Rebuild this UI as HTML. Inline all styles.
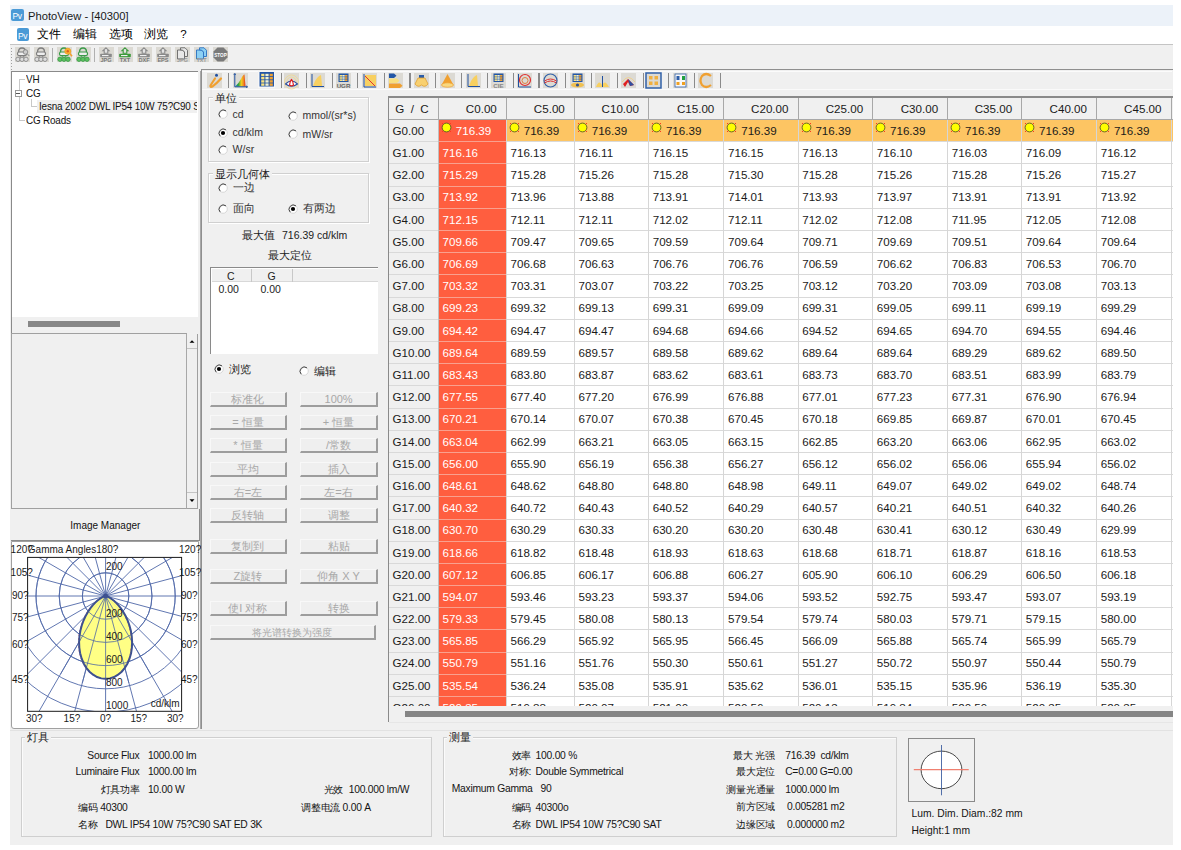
<!DOCTYPE html><html><head><meta charset="utf-8"><style>
html,body{margin:0;padding:0;}
body{width:1181px;height:850px;overflow:hidden;position:relative;background:#fff;font-family:"Liberation Sans",sans-serif;font-size:11px;color:#000;}
body div{position:absolute;box-sizing:border-box;}
.t{white-space:nowrap;line-height:1;}
.btn{background:#efefef;border-top:1px solid #f8f8f8;border-left:1px solid #f8f8f8;border-right:2px solid #9d9d9d;border-bottom:2px solid #9d9d9d;color:#a8a8a8;font-size:11px;text-align:center;line-height:13px;}
.ico{background:#dcdad4;}
svg{position:absolute;overflow:visible;}
</style></head><body>
<div style="left:10px;top:5px;width:1163px;height:840px;background:#f0f0f0;"></div>
<div style="left:10px;top:5px;width:1163px;height:21px;background:#ecf2f9;"></div>
<div style="left:11px;top:9px;width:12.5px;height:12px;background:#4a9ad6;border-radius:2px;"></div>
<div class="t" style="left:12.5px;top:12px;font-size:8.5px;color:#fff;letter-spacing:-0.3px;">Pv</div>
<div class="t" style="left:28px;top:9px;font-size:11.2px;line-height:14px;color:#1a1a1a;">PhotoView - [40300]</div>
<div style="left:10px;top:26px;width:1163px;height:18px;background:#fff;"></div>
<div style="left:16.5px;top:28.4px;width:12.7px;height:12.2px;background:#4a9ad6;border-radius:2px;"></div>
<div class="t" style="left:18px;top:31.5px;font-size:8.5px;color:#fff;letter-spacing:-0.3px;">Pv</div>
<div class="t" style="left:37px;top:28px;font-size:11.5px;line-height:13px;color:#000;">文件</div>
<div class="t" style="left:72.9px;top:28px;font-size:11.5px;line-height:13px;color:#000;">编辑</div>
<div class="t" style="left:108.5px;top:28px;font-size:11.5px;line-height:13px;color:#000;">选项</div>
<div class="t" style="left:144.3px;top:28px;font-size:11.5px;line-height:13px;color:#000;">浏览</div>
<div class="t" style="left:180.3px;top:28px;font-size:11.5px;line-height:13px;color:#000;">?</div>
<div style="left:10px;top:44px;width:1163px;height:1px;background:#c4c4c4;"></div>
<div style="left:11px;top:48px;width:1px;height:1.3px;background:#a0a0a0;"></div>
<div style="left:11px;top:51px;width:1px;height:1.3px;background:#a0a0a0;"></div>
<div style="left:11px;top:54px;width:1px;height:1.3px;background:#a0a0a0;"></div>
<div style="left:11px;top:57px;width:1px;height:1.3px;background:#a0a0a0;"></div>
<div style="left:11px;top:60px;width:1px;height:1.3px;background:#a0a0a0;"></div>
<div style="left:11px;top:63px;width:1px;height:1.3px;background:#a0a0a0;"></div>
<div style="left:11px;top:66px;width:1px;height:1.3px;background:#a0a0a0;"></div>
<div style="left:11px;top:69px;width:1px;height:1.3px;background:#a0a0a0;"></div>
<svg style="left:15px;top:47px" width="15" height="15"><rect width="15" height="15" fill="#dcdad4"/><path d="M3.5,5 Q3.5,1 7,1 Q10.5,1 10.5,5" fill="none" stroke="#7d7d7d" stroke-width="1.3"/><rect x="2.5" y="5" width="9" height="3.6" rx="1.5" fill="#eee" stroke="#7d7d7d" stroke-width="1.2"/><path d="M4.5,9 L7,11 L9.5,9" fill="none" stroke="#7d7d7d" stroke-width="1"/><circle cx="3" cy="12.3" r="2.2" fill="#ddd" stroke="#7d7d7d" stroke-width="0.8"/><circle cx="7" cy="12.3" r="2.2" fill="#ddd" stroke="#7d7d7d" stroke-width="0.8"/><circle cx="11" cy="12.3" r="2.2" fill="#ddd" stroke="#7d7d7d" stroke-width="0.8"/><circle cx="10.5" cy="5" r="2.3" fill="#ccc" stroke="#888" stroke-width="0.9"/><line x1="12" y1="6.5" x2="14.3" y2="9" stroke="#999" stroke-width="1.1"/></svg>
<svg style="left:34px;top:47px" width="15" height="15"><rect width="15" height="15" fill="#dcdad4"/><path d="M3.5,5 Q3.5,1 7,1 Q10.5,1 10.5,5" fill="none" stroke="#7d7d7d" stroke-width="1.3"/><rect x="2.5" y="5" width="9" height="3.6" rx="1.5" fill="#eee" stroke="#7d7d7d" stroke-width="1.2"/><path d="M4.5,9 L7,11 L9.5,9" fill="none" stroke="#7d7d7d" stroke-width="1"/><circle cx="3" cy="12.3" r="2.2" fill="#ddd" stroke="#7d7d7d" stroke-width="0.8"/><circle cx="7" cy="12.3" r="2.2" fill="#ddd" stroke="#7d7d7d" stroke-width="0.8"/><circle cx="11" cy="12.3" r="2.2" fill="#ddd" stroke="#7d7d7d" stroke-width="0.8"/></svg>
<svg style="left:57px;top:47px" width="15" height="15"><rect width="15" height="15" fill="#dcdad4"/><path d="M3.5,5 Q3.5,1 7,1 Q10.5,1 10.5,5" fill="none" stroke="#3a9a48" stroke-width="1.3"/><rect x="2.5" y="5" width="9" height="3.6" rx="1.5" fill="#eee" stroke="#3a9a48" stroke-width="1.2"/><path d="M4.5,9 L7,11 L9.5,9" fill="none" stroke="#3a9a48" stroke-width="1"/><circle cx="3" cy="12.3" r="2.2" fill="#5cc060" stroke="#3a9a48" stroke-width="0.8"/><circle cx="7" cy="12.3" r="2.2" fill="#5cc060" stroke="#3a9a48" stroke-width="0.8"/><circle cx="11" cy="12.3" r="2.2" fill="#5cc060" stroke="#3a9a48" stroke-width="0.8"/><circle cx="10.8" cy="4.2" r="3" fill="#f8b030" stroke="#f0a020" stroke-width="0.8"/><circle cx="10.8" cy="4.2" r="1.2" fill="#e06020"/><line x1="12.8" y1="6.5" x2="15" y2="9.2" stroke="#f0a030" stroke-width="1.6"/></svg>
<svg style="left:76px;top:47px" width="15" height="15"><rect width="15" height="15" fill="#dcdad4"/><path d="M3.5,5 Q3.5,1 7,1 Q10.5,1 10.5,5" fill="none" stroke="#3a9a48" stroke-width="1.3"/><rect x="2.5" y="5" width="9" height="3.6" rx="1.5" fill="#eee" stroke="#3a9a48" stroke-width="1.2"/><path d="M4.5,9 L7,11 L9.5,9" fill="none" stroke="#3a9a48" stroke-width="1"/><circle cx="3" cy="12.3" r="2.2" fill="#5cc060" stroke="#3a9a48" stroke-width="0.8"/><circle cx="7" cy="12.3" r="2.2" fill="#5cc060" stroke="#3a9a48" stroke-width="0.8"/><circle cx="11" cy="12.3" r="2.2" fill="#5cc060" stroke="#3a9a48" stroke-width="0.8"/></svg>
<svg style="left:99px;top:47px" width="15" height="15"><rect width="15" height="15" fill="#dcdad4"/><path d="M7,0.8 L10,3.6 L8.8,3.6 L8.8,6.2 L5.2,6.2 L5.2,3.6 L4,3.6 Z" fill="#e4e4e4" stroke="#8a8a8a" stroke-width="1.1"/><rect x="1.2" y="6.8" width="11.6" height="3.4" rx="0.8" fill="#8a8a8a"/><rect x="3" y="8" width="6.5" height="1.1" fill="#f0f0f0"/><text x="7" y="15.3" font-size="5.6" fill="#777" text-anchor="middle" font-family="Liberation Sans" font-weight="bold">JPG</text></svg>
<svg style="left:118px;top:47px" width="15" height="15"><rect width="15" height="15" fill="#dcdad4"/><path d="M7,0.8 L10,3.6 L8.8,3.6 L8.8,6.2 L5.2,6.2 L5.2,3.6 L4,3.6 Z" fill="#e4e4e4" stroke="#3c9a3c" stroke-width="1.1"/><rect x="1.2" y="6.8" width="11.6" height="3.4" rx="0.8" fill="#3c9a3c"/><rect x="3" y="8" width="6.5" height="1.1" fill="#f0f0f0"/><text x="7" y="15.3" font-size="5.6" fill="#777" text-anchor="middle" font-family="Liberation Sans" font-weight="bold">TXT</text></svg>
<svg style="left:137px;top:47px" width="15" height="15"><rect width="15" height="15" fill="#dcdad4"/><path d="M7,0.8 L10,3.6 L8.8,3.6 L8.8,6.2 L5.2,6.2 L5.2,3.6 L4,3.6 Z" fill="#e4e4e4" stroke="#8a8a8a" stroke-width="1.1"/><rect x="1.2" y="6.8" width="11.6" height="3.4" rx="0.8" fill="#8a8a8a"/><rect x="3" y="8" width="6.5" height="1.1" fill="#f0f0f0"/><text x="7" y="15.3" font-size="5.6" fill="#777" text-anchor="middle" font-family="Liberation Sans" font-weight="bold">DXF</text></svg>
<svg style="left:156px;top:47px" width="15" height="15"><rect width="15" height="15" fill="#dcdad4"/><path d="M7,0.8 L10,3.6 L8.8,3.6 L8.8,6.2 L5.2,6.2 L5.2,3.6 L4,3.6 Z" fill="#e4e4e4" stroke="#8a8a8a" stroke-width="1.1"/><rect x="1.2" y="6.8" width="11.6" height="3.4" rx="0.8" fill="#8a8a8a"/><rect x="3" y="8" width="6.5" height="1.1" fill="#f0f0f0"/><text x="7" y="15.3" font-size="5.6" fill="#777" text-anchor="middle" font-family="Liberation Sans" font-weight="bold">EPS</text></svg>
<svg style="left:175px;top:47px" width="15" height="15"><rect width="15" height="15" fill="#dcdad4"/><path d="M2.5,3 H7.5 L9.5,5 V12 H2.5 Z" fill="#e8e8e8" stroke="#666" stroke-width="0.9"/><path d="M5.5,0.8 H10 L12.5,3.3 V9.5 H9.5 V5 L7.5,3 H5.5Z" fill="#e8e8e8" stroke="#666" stroke-width="0.9"/><text x="7.5" y="15.3" font-size="5.4" fill="#999" text-anchor="middle" font-family="Liberation Sans" font-weight="bold">JPG</text></svg>
<svg style="left:194px;top:47px" width="15" height="15"><rect width="15" height="15" fill="#dcdad4"/><path d="M2.5,3 H7.5 L9.5,5 V12 H2.5 Z" fill="#8cd0f4" stroke="#2a70c0" stroke-width="0.9"/><path d="M5.5,0.8 H10 L12.5,3.3 V9.5 H9.5 V5 L7.5,3 H5.5Z" fill="#8cd0f4" stroke="#2a70c0" stroke-width="0.9"/><text x="7.5" y="15.3" font-size="5.4" fill="#999" text-anchor="middle" font-family="Liberation Sans" font-weight="bold">TXT</text></svg>
<svg style="left:213px;top:47px" width="15" height="15"><rect width="15" height="15" fill="#dcdad4"/><polygon points="4.5,0.5 10.5,0.5 14.5,4.5 14.5,10.5 10.5,14.5 4.5,14.5 0.5,10.5 0.5,4.5" fill="#7a7a7a"/><text x="7.5" y="9.6" font-size="5.3" fill="#fff" text-anchor="middle" font-family="Liberation Sans" font-weight="bold" textLength="12.5" lengthAdjust="spacingAndGlyphs">STOP</text></svg>
<div style="left:52px;top:48px;width:1px;height:14px;background:#b0b0b0;"></div>
<div style="left:94px;top:48px;width:1px;height:14px;background:#b0b0b0;"></div>
<div style="left:11px;top:71px;width:187px;height:262px;background:#fff;border-top:1px solid #8a8a8a;border-left:1px solid #8a8a8a;"></div>
<div style="left:12px;top:316.5px;width:186px;height:16.5px;background:#f0f0f0;"></div>
<div style="left:28px;top:321px;width:92px;height:6.3px;background:#878787;"></div>
<div style="left:18.5px;top:79px;width:1px;height:41px;background:#c8c8c8;"></div>
<div style="left:18.5px;top:79px;width:6px;height:1px;background:#c8c8c8;"></div>
<div style="left:18.5px;top:119.5px;width:6px;height:1px;background:#c8c8c8;"></div>
<div style="left:14.8px;top:89.5px;width:7px;height:7px;background:#fff;border:1px solid #9a9a9a;"></div>
<div style="left:16.3px;top:92.7px;width:4px;height:1px;background:#555;"></div>
<div style="left:31px;top:99px;width:1px;height:7px;background:#c8c8c8;"></div>
<div style="left:31px;top:106px;width:6px;height:1px;background:#c8c8c8;"></div>
<div style="left:37px;top:99.6px;width:160px;height:13.2px;background:#f0f0f0;"></div>
<div style="left:12px;top:72px;width:185px;height:244px;overflow:hidden;">
<div class="t" style="left:13.7px;top:2px;font-size:11px;line-height:11px;color:#111;letter-spacing:-0.2px;transform:scaleX(0.9);transform-origin:0 0;">VH</div>
<div class="t" style="left:13.7px;top:16px;font-size:11px;line-height:11px;color:#111;letter-spacing:-0.2px;transform:scaleX(0.9);transform-origin:0 0;">CG</div>
<div class="t" style="left:26.8px;top:29px;font-size:11px;line-height:11px;color:#111;letter-spacing:-0.2px;transform:scaleX(0.9);transform-origin:0 0;">Iesna 2002 DWL IP54 10W 75?C90 SAT ED 3K</div>
<div class="t" style="left:13.7px;top:42.5px;font-size:11px;line-height:11px;color:#111;letter-spacing:-0.2px;transform:scaleX(0.9);transform-origin:0 0;">CG Roads</div>
</div>
<div style="left:11px;top:333px;width:175.5px;height:175.5px;background:#f0f0f0;border-top:1px solid #a0a0a0;border-left:1px solid #a0a0a0;border-right:1.5px solid #a8a8a8;border-bottom:1px solid #a0a0a0;"></div>
<div style="left:186.5px;top:333.5px;width:11.5px;height:175px;background:#f0f0f0;border-right:1.5px solid #a0a0a0;border-bottom:1px solid #a0a0a0;"></div>
<div style="left:186.5px;top:334px;width:10px;height:15px;background:#f0f0f0;border-bottom:1px solid #c4c4c4;"></div>
<div style="left:186.5px;top:492px;width:10px;height:15px;background:#f0f0f0;border-top:1px solid #c4c4c4;"></div>
<svg style="left:186.5px;top:334px" width="10" height="173"><polygon points="2.5,8.8 7.5,8.8 5,6.2" fill="#000"/><polygon points="2.5,165.2 7.5,165.2 5,168" fill="#000"/></svg>
<div style="left:11px;top:509px;width:188.5px;height:31.5px;background:#f0f0f0;border-right:1.6px solid #8a8a8a;border-bottom:1.8px solid #8a8a8a;"></div>
<div class="t" style="left:70.3px;top:520.5px;font-size:10px;color:#111;">Image Manager</div>
<div style="left:11px;top:540.5px;width:188px;height:188px;background:#fff;border:1px solid #a0a0a0;border-radius:0 0 3px 3px;"></div>
<div style="left:200px;top:71px;width:2px;height:658px;background:#a8a8a8;"></div>
<svg style="left:0px;top:0px" width="1181" height="850" viewBox="0 0 1181 850"><defs><clipPath id="pc"><rect x="27.6" y="557.4" width="154.0" height="153.89999999999998"/></clipPath></defs><g clip-path="url(#pc)" stroke="#4f68a8" stroke-width="0.9" fill="none"><circle cx="105.6" cy="596.0" r="23.20"/><circle cx="105.6" cy="596.0" r="46.40"/><circle cx="105.6" cy="596.0" r="69.60"/><circle cx="105.6" cy="596.0" r="92.80"/><circle cx="105.6" cy="596.0" r="116.00"/><circle cx="105.6" cy="596.0" r="139.20"/><circle cx="105.6" cy="596.0" r="162.40"/><line x1="105.6" y1="596.0" x2="105.60" y2="896.00"/><line x1="105.6" y1="596.0" x2="183.25" y2="885.78"/><line x1="105.6" y1="596.0" x2="255.60" y2="855.81"/><line x1="105.6" y1="596.0" x2="317.73" y2="808.13"/><line x1="105.6" y1="596.0" x2="365.41" y2="746.00"/><line x1="105.6" y1="596.0" x2="395.38" y2="673.65"/><line x1="105.6" y1="596.0" x2="405.60" y2="596.00"/><line x1="105.6" y1="596.0" x2="395.38" y2="518.35"/><line x1="105.6" y1="596.0" x2="365.41" y2="446.00"/><line x1="105.6" y1="596.0" x2="317.73" y2="383.87"/><line x1="105.6" y1="596.0" x2="255.60" y2="336.19"/><line x1="105.6" y1="596.0" x2="183.25" y2="306.22"/><line x1="105.6" y1="596.0" x2="105.60" y2="296.00"/><line x1="105.6" y1="596.0" x2="27.95" y2="306.22"/><line x1="105.6" y1="596.0" x2="-44.40" y2="336.19"/><line x1="105.6" y1="596.0" x2="-106.53" y2="383.87"/><line x1="105.6" y1="596.0" x2="-154.21" y2="446.00"/><line x1="105.6" y1="596.0" x2="-184.18" y2="518.35"/><line x1="105.6" y1="596.0" x2="-194.40" y2="596.00"/><line x1="105.6" y1="596.0" x2="-184.18" y2="673.65"/><line x1="105.6" y1="596.0" x2="-154.21" y2="746.00"/><line x1="105.6" y1="596.0" x2="-106.53" y2="808.13"/><line x1="105.6" y1="596.0" x2="-44.40" y2="855.81"/><line x1="105.6" y1="596.0" x2="27.95" y2="885.78"/></g><path d="M105.60,596.00 L105.59,596.00 L105.52,596.01 L105.34,596.04 L104.98,596.13 L104.39,596.32 L103.53,596.67 L102.39,597.23 L100.95,598.07 L99.22,599.25 L97.23,600.83 L95.04,602.86 L92.69,605.38 L90.28,608.41 L87.88,611.95 L85.60,616.00 L83.52,620.53 L81.74,625.47 L80.36,630.74 L79.45,636.27 L79.08,641.93 L79.30,647.61 L80.14,653.18 L81.61,658.50 L83.69,663.44 L86.34,667.86 L89.52,671.67 L93.13,674.74 L97.09,677.00 L101.28,678.38 L105.60,678.84 L109.92,678.38 L114.11,677.00 L118.07,674.74 L121.68,671.67 L124.86,667.86 L127.51,663.44 L129.59,658.50 L131.06,653.18 L131.90,647.61 L132.12,641.93 L131.75,636.27 L130.84,630.74 L129.46,625.47 L127.68,620.53 L125.60,616.00 L123.32,611.95 L120.92,608.41 L118.51,605.38 L116.16,602.86 L113.97,600.83 L111.98,599.25 L110.25,598.07 L108.81,597.23 L107.67,596.67 L106.81,596.32 L106.22,596.13 L105.86,596.04 L105.68,596.01 L105.61,596.00 L105.60,596.00 Z" fill="#ffff78" fill-opacity="0.9" stroke="none" clip-path="url(#pc)"/><g clip-path="url(#pc)" stroke="#4f68a8" stroke-width="0.9" fill="none"><circle cx="105.6" cy="596.0" r="23.20" stroke-opacity="0.85"/><circle cx="105.6" cy="596.0" r="46.40" stroke-opacity="0.85"/><circle cx="105.6" cy="596.0" r="69.60" stroke-opacity="0.85"/><line x1="105.6" y1="596.0" x2="60.60" y2="673.94" stroke-opacity="0.85"/><line x1="105.6" y1="596.0" x2="82.31" y2="682.93" stroke-opacity="0.85"/><line x1="105.6" y1="596.0" x2="105.60" y2="686.00" stroke-opacity="0.85"/><line x1="105.6" y1="596.0" x2="128.89" y2="682.93" stroke-opacity="0.85"/><line x1="105.6" y1="596.0" x2="150.60" y2="673.94" stroke-opacity="0.85"/></g><path d="M105.60,596.00 L105.59,596.00 L105.52,596.01 L105.34,596.04 L104.98,596.13 L104.39,596.32 L103.53,596.67 L102.39,597.23 L100.95,598.07 L99.22,599.25 L97.23,600.83 L95.04,602.86 L92.69,605.38 L90.28,608.41 L87.88,611.95 L85.60,616.00 L83.52,620.53 L81.74,625.47 L80.36,630.74 L79.45,636.27 L79.08,641.93 L79.30,647.61 L80.14,653.18 L81.61,658.50 L83.69,663.44 L86.34,667.86 L89.52,671.67 L93.13,674.74 L97.09,677.00 L101.28,678.38 L105.60,678.84 L109.92,678.38 L114.11,677.00 L118.07,674.74 L121.68,671.67 L124.86,667.86 L127.51,663.44 L129.59,658.50 L131.06,653.18 L131.90,647.61 L132.12,641.93 L131.75,636.27 L130.84,630.74 L129.46,625.47 L127.68,620.53 L125.60,616.00 L123.32,611.95 L120.92,608.41 L118.51,605.38 L116.16,602.86 L113.97,600.83 L111.98,599.25 L110.25,598.07 L108.81,597.23 L107.67,596.67 L106.81,596.32 L106.22,596.13 L105.86,596.04 L105.68,596.01 L105.61,596.00 L105.60,596.00 Z" fill="none" stroke="#e05050" stroke-width="0.8" stroke-dasharray="2,2" transform="translate(-0.6,0)"/><path d="M105.60,596.00 L105.59,596.00 L105.52,596.01 L105.34,596.04 L104.98,596.13 L104.39,596.32 L103.53,596.67 L102.39,597.23 L100.95,598.07 L99.22,599.25 L97.23,600.83 L95.04,602.86 L92.69,605.38 L90.28,608.41 L87.88,611.95 L85.60,616.00 L83.52,620.53 L81.74,625.47 L80.36,630.74 L79.45,636.27 L79.08,641.93 L79.30,647.61 L80.14,653.18 L81.61,658.50 L83.69,663.44 L86.34,667.86 L89.52,671.67 L93.13,674.74 L97.09,677.00 L101.28,678.38 L105.60,678.84 L109.92,678.38 L114.11,677.00 L118.07,674.74 L121.68,671.67 L124.86,667.86 L127.51,663.44 L129.59,658.50 L131.06,653.18 L131.90,647.61 L132.12,641.93 L131.75,636.27 L130.84,630.74 L129.46,625.47 L127.68,620.53 L125.60,616.00 L123.32,611.95 L120.92,608.41 L118.51,605.38 L116.16,602.86 L113.97,600.83 L111.98,599.25 L110.25,598.07 L108.81,597.23 L107.67,596.67 L106.81,596.32 L106.22,596.13 L105.86,596.04 L105.68,596.01 L105.61,596.00 L105.60,596.00 Z" fill="none" stroke="#3d5190" stroke-width="2"/><circle cx="105.6" cy="596.0" r="2.5" fill="#3d5190"/><rect x="27.6" y="557.4" width="154.0" height="153.89999999999998" fill="none" stroke="#1a1a1a" stroke-width="1"/></svg>
<div class="t" style="left:10.6px;top:545.3px;font-size:10px;color:#1a1a1a;">120?</div>
<div class="t" style="left:179px;top:545.3px;font-size:10px;color:#1a1a1a;">120?</div>
<div class="t" style="left:10.6px;top:567.9px;font-size:10px;color:#1a1a1a;">105?</div>
<div class="t" style="left:179px;top:567.9px;font-size:10px;color:#1a1a1a;">105?</div>
<div class="t" style="left:12px;top:591.4px;font-size:10px;color:#1a1a1a;">90?</div>
<div class="t" style="left:181px;top:591.4px;font-size:10px;color:#1a1a1a;">90?</div>
<div class="t" style="left:12px;top:613.1px;font-size:10px;color:#1a1a1a;">75?</div>
<div class="t" style="left:181px;top:613.1px;font-size:10px;color:#1a1a1a;">75?</div>
<div class="t" style="left:12px;top:639.5px;font-size:10px;color:#1a1a1a;">60?</div>
<div class="t" style="left:181px;top:639.5px;font-size:10px;color:#1a1a1a;">60?</div>
<div class="t" style="left:12px;top:674.7px;font-size:10px;color:#1a1a1a;">45?</div>
<div class="t" style="left:181px;top:674.7px;font-size:10px;color:#1a1a1a;">45?</div>
<div class="t" style="left:27.8px;top:545.2px;font-size:10px;color:#1a1a1a;">Gamma Angles180?</div>
<div class="t" style="left:26px;top:713.8px;font-size:10px;color:#1a1a1a;">30?</div>
<div class="t" style="left:63.6px;top:713.8px;font-size:10px;color:#1a1a1a;">15?</div>
<div class="t" style="left:100px;top:713.8px;font-size:10px;color:#1a1a1a;">0?</div>
<div class="t" style="left:130.5px;top:713.8px;font-size:10px;color:#1a1a1a;">15?</div>
<div class="t" style="left:167px;top:713.8px;font-size:10px;color:#1a1a1a;">30?</div>
<div class="t" style="left:106px;top:561.5px;font-size:10px;color:#1a1a1a;">200</div>
<div class="t" style="left:106px;top:608.5px;font-size:10px;color:#1a1a1a;">200</div>
<div class="t" style="left:106px;top:631.5px;font-size:10px;color:#1a1a1a;">400</div>
<div class="t" style="left:106px;top:654.5px;font-size:10px;color:#1a1a1a;">600</div>
<div class="t" style="left:106px;top:677.5px;font-size:10px;color:#1a1a1a;">800</div>
<div class="t" style="left:106px;top:700.5px;font-size:10px;color:#1a1a1a;">1000</div>
<div class="t" style="left:150.7px;top:699.2px;font-size:10px;color:#1a1a1a;">cd/klm</div>
<div style="left:201px;top:69px;width:972px;height:660px;background:#f0f0f0;border-top:1.5px solid #8f8f8f;border-left:1px solid #8f8f8f;"></div>
<div style="left:202px;top:71px;width:970px;height:1px;background:#fbfbfb;"></div>
<div style="left:202px;top:88.6px;width:970px;height:1px;background:#fafafa;"></div>
<div style="left:228.2px;top:73px;width:1.2px;height:15px;background:#8a8a8a;"></div>
<div style="left:281.2px;top:73px;width:1.2px;height:15px;background:#8a8a8a;"></div>
<div style="left:305.9px;top:73px;width:1.2px;height:15px;background:#8a8a8a;"></div>
<div style="left:331.9px;top:73px;width:1.2px;height:15px;background:#8a8a8a;"></div>
<div style="left:357px;top:73px;width:1.2px;height:15px;background:#8a8a8a;"></div>
<div style="left:383.6px;top:73px;width:1.2px;height:15px;background:#8a8a8a;"></div>
<div style="left:409.4px;top:73px;width:1.2px;height:15px;background:#8a8a8a;"></div>
<div style="left:435.3px;top:73px;width:1.2px;height:15px;background:#8a8a8a;"></div>
<div style="left:461.3px;top:73px;width:1.2px;height:15px;background:#8a8a8a;"></div>
<div style="left:487px;top:73px;width:1.2px;height:15px;background:#8a8a8a;"></div>
<div style="left:512.6px;top:73px;width:1.2px;height:15px;background:#8a8a8a;"></div>
<div style="left:538.4px;top:73px;width:1.2px;height:15px;background:#8a8a8a;"></div>
<div style="left:564.8px;top:73px;width:1.2px;height:15px;background:#8a8a8a;"></div>
<div style="left:590.8px;top:73px;width:1.2px;height:15px;background:#8a8a8a;"></div>
<div style="left:616.5px;top:73px;width:1.2px;height:15px;background:#8a8a8a;"></div>
<div style="left:642.5px;top:73px;width:1.2px;height:15px;background:#8a8a8a;"></div>
<div style="left:668.3px;top:73px;width:1.2px;height:15px;background:#8a8a8a;"></div>
<div style="left:694px;top:73px;width:1.2px;height:15px;background:#8a8a8a;"></div>
<div style="left:720px;top:73px;width:1.2px;height:15px;background:#8a8a8a;"></div>
<svg style="left:206.8px;top:72.8px" width="15" height="15"><rect width="15" height="15" fill="#dcdad4"/><circle cx="9.5" cy="2.3" r="1.5" fill="#2050a0"/><path d="M8,5.5 Q5,10 3.5,12.5 Q3,14.5 5.5,13.5 Q10,10 14,5.5" stroke="#f0a030" stroke-width="2.2" fill="none" stroke-linecap="round"/></svg>
<svg style="left:232.6px;top:72.8px" width="15" height="15"><defs><linearGradient id="spg" x1="0" x2="1" y1="0" y2="0"><stop offset="0" stop-color="#2090d0"/><stop offset="0.3" stop-color="#20a040"/><stop offset="0.6" stop-color="#f0d020"/><stop offset="0.85" stop-color="#f08020"/><stop offset="1" stop-color="#e02020"/></linearGradient></defs><rect width="15" height="15" fill="#dcdad4"/><path d="M2,13.5 Q6,10 8,6 Q10,1.5 11.5,1.5 L12.5,13.5Z" fill="url(#spg)"/><path d="M1.8,0.5 V13.8 H14.5" stroke="#2050a0" stroke-width="1" fill="none"/><path d="M0.8,2 L1.8,0.5 L2.8,2" stroke="#2050a0" stroke-width="0.8" fill="none"/><path d="M13,12.8 L14.5,13.8 L13,14.8" stroke="#2050a0" stroke-width="0.8" fill="none"/></svg>
<svg style="left:257.9px;top:71px" width="17" height="17"><rect x="0" y="0" width="17" height="17" fill="#f6f6f6"/><rect x="1.5" y="1" width="14.5" height="14.5" fill="#2356a6"/><rect x="3.2" y="2.8" width="3.2" height="2.4" fill="#f8e080"/><rect x="7.4" y="2.8" width="3.2" height="2.4" fill="#f0f0d0"/><rect x="11.6" y="2.8" width="3.2" height="2.4" fill="#f0a030"/><rect x="3.2" y="6.0" width="3.2" height="2.4" fill="#f8e080"/><rect x="7.4" y="6.0" width="3.2" height="2.4" fill="#f0f0d0"/><rect x="11.6" y="6.0" width="3.2" height="2.4" fill="#f0a030"/><rect x="3.2" y="9.2" width="3.2" height="2.4" fill="#f8e080"/><rect x="7.4" y="9.2" width="3.2" height="2.4" fill="#f0f0d0"/><rect x="11.6" y="9.2" width="3.2" height="2.4" fill="#f0a030"/><rect x="3.2" y="12.4" width="3.2" height="2.4" fill="#f8e080"/><rect x="7.4" y="12.4" width="3.2" height="2.4" fill="#f0f0d0"/><rect x="11.6" y="12.4" width="3.2" height="2.4" fill="#f0a030"/></svg>
<svg style="left:284.3px;top:72.8px" width="15" height="15"><rect width="15" height="15" fill="#dcdad4"/><circle cx="7.5" cy="9" r="7" stroke="#f0d890" fill="none" stroke-width="0.8"/><circle cx="7.5" cy="9" r="4.8" stroke="#f0d890" fill="none" stroke-width="0.8"/><path d="M1.5,11 Q7.5,5 13.5,11 Q7.5,15.5 1.5,11Z" fill="#fff" stroke="#3050a0" stroke-width="1.1"/><path d="M5.5,12 Q6,8 7.5,6.5 Q9,8 9.5,12 Q7.5,13.5 5.5,12Z" fill="#fff" stroke="#e02020" stroke-width="1.2"/></svg>
<svg style="left:310.3px;top:72.8px" width="15" height="15"><rect width="15" height="15" fill="#dcdad4"/><path d="M3,13 L5,8 Q8,3 11,2 L12,13Z" fill="#f8d060"/><path d="M2,1 V13.5 H14" stroke="#2050a0" fill="none"/></svg>
<svg style="left:335.6px;top:72.8px" width="15" height="15"><rect width="15" height="15" fill="#dcdad4"/><rect x="2.5" y="0.5" width="10" height="8.5" fill="#2356a6"/><rect x="3.6" y="2" width="2.4" height="1.6" fill="#f8e080"/><rect x="6.3" y="2" width="2.4" height="1.6" fill="#f0f0d0"/><rect x="9" y="2" width="2.4" height="1.6" fill="#f0a030"/><rect x="3.6" y="4.2" width="2.4" height="1.6" fill="#f8e080"/><rect x="6.3" y="4.2" width="2.4" height="1.6" fill="#f0f0d0"/><rect x="9" y="4.2" width="2.4" height="1.6" fill="#f0a030"/><rect x="3.6" y="6.4" width="2.4" height="1.6" fill="#f8e080"/><rect x="6.3" y="6.4" width="2.4" height="1.6" fill="#f0f0d0"/><rect x="9" y="6.4" width="2.4" height="1.6" fill="#f0a030"/><text x="7.5" y="14.8" font-size="6.2" fill="#666" text-anchor="middle" font-family="Liberation Sans" font-weight="bold">UGR</text></svg>
<svg style="left:362.0px;top:72.8px" width="15" height="15"><rect width="15" height="15" fill="#dcdad4"/><rect x="3" y="2" width="11" height="11" fill="#f8d060"/><path d="M3,3 Q8,8 13,13" stroke="#e03030" fill="none"/><path d="M2,1 V14 H14" stroke="#2050a0" fill="none"/></svg>
<svg style="left:387.8px;top:72.8px" width="15" height="15"><rect width="15" height="15" fill="#dcdad4"/><path d="M1,0.5 H6 L8.5,2.8 L6,5 H1Z" fill="#2356a6"/><path d="M1,5.5 H9 L11.5,7.8 L9,10 H1Z" fill="#f8e080"/><path d="M1,10.5 H12 L14.5,12.7 L12,15 H1Z" fill="#f0a030"/></svg>
<svg style="left:413.8px;top:72.8px" width="15" height="15"><rect width="15" height="15" fill="#dcdad4"/><rect x="5" y="2" width="5" height="3" fill="#2a5ca8"/><path d="M4,5 H11 L14,11 Q11,15 7.5,12 Q4,15 1,11Z" fill="#f8d070" stroke="#e0a030" stroke-width="0.8"/></svg>
<svg style="left:439.5px;top:72.8px" width="15" height="15"><rect width="15" height="15" fill="#dcdad4"/><path d="M7.5,1 L13.5,12 L1.5,12Z" fill="#f0a030"/><ellipse cx="7.5" cy="12" rx="6" ry="2.2" fill="#f8d880" stroke="#f0a030" stroke-width="0.7"/></svg>
<svg style="left:465.7px;top:72.8px" width="15" height="15"><rect width="15" height="15" fill="#dcdad4"/><path d="M3,13 L5,8 Q8,3 11,2 L12,13Z" fill="#f8d060"/><path d="M2,1 V13.5 H14" stroke="#2050a0" fill="none"/></svg>
<svg style="left:491.0px;top:72.8px" width="15" height="15"><rect width="15" height="15" fill="#dcdad4"/><rect x="2.5" y="0.5" width="10" height="8.5" fill="#2356a6"/><rect x="3.6" y="2" width="2.4" height="1.6" fill="#f8e080"/><rect x="6.3" y="2" width="2.4" height="1.6" fill="#f0f0d0"/><rect x="9" y="2" width="2.4" height="1.6" fill="#f0a030"/><rect x="3.6" y="4.2" width="2.4" height="1.6" fill="#f8e080"/><rect x="6.3" y="4.2" width="2.4" height="1.6" fill="#f0f0d0"/><rect x="9" y="4.2" width="2.4" height="1.6" fill="#f0a030"/><rect x="3.6" y="6.4" width="2.4" height="1.6" fill="#f8e080"/><rect x="6.3" y="6.4" width="2.4" height="1.6" fill="#f0f0d0"/><rect x="9" y="6.4" width="2.4" height="1.6" fill="#f0a030"/><text x="7.5" y="14.8" font-size="6.2" fill="#888" text-anchor="middle" font-family="Liberation Sans" font-weight="bold">CIE</text></svg>
<svg style="left:517.4px;top:72.8px" width="15" height="15"><rect width="15" height="15" fill="#dcdad4"/><circle cx="8" cy="7" r="5.5" fill="none" stroke="#e03030" stroke-width="1.2"/><circle cx="8" cy="7.5" r="3" fill="none" stroke="#e08040"/><path d="M1.5,1 V14 H14" stroke="#2050a0" fill="none"/></svg>
<svg style="left:542.8px;top:72.8px" width="15" height="15"><rect width="15" height="15" fill="#dcdad4"/><circle cx="7.5" cy="7.5" r="6.5" fill="none" stroke="#3060a8" stroke-width="1.2"/><path d="M1.5,8 Q7.5,4 13.5,8" stroke="#e03030" fill="none"/><path d="M1.5,10 Q7.5,6 13.5,10" stroke="#e03030" fill="none"/></svg>
<svg style="left:570.3px;top:72.8px" width="15" height="15"><rect width="15" height="15" fill="#dcdad4"/><rect x="2.5" y="0.5" width="10" height="8.5" fill="#2356a6"/><rect x="3.6" y="2" width="2.4" height="1.6" fill="#f8e080"/><rect x="6.3" y="2" width="2.4" height="1.6" fill="#f0f0d0"/><rect x="9" y="2" width="2.4" height="1.6" fill="#f0a030"/><rect x="3.6" y="4.2" width="2.4" height="1.6" fill="#f8e080"/><rect x="6.3" y="4.2" width="2.4" height="1.6" fill="#f0f0d0"/><rect x="9" y="4.2" width="2.4" height="1.6" fill="#f0a030"/><rect x="3.6" y="6.4" width="2.4" height="1.6" fill="#f8e080"/><rect x="6.3" y="6.4" width="2.4" height="1.6" fill="#f0f0d0"/><rect x="9" y="6.4" width="2.4" height="1.6" fill="#f0a030"/><ellipse cx="7.5" cy="12" rx="6.5" ry="2.6" fill="#f0c050"/><circle cx="7.5" cy="12" r="1.6" fill="#305090"/></svg>
<svg style="left:594.5px;top:72.8px" width="15" height="15"><rect width="15" height="15" fill="#dcdad4"/><path d="M1,14 Q4,6 7,12 Q10,6 14,14Z" fill="#f8d060"/><line x1="7.5" y1="3" x2="7.5" y2="14" stroke="#2050a0"/></svg>
<svg style="left:620.5px;top:72.8px" width="15" height="15"><rect width="15" height="15" fill="#dcdad4"/><path d="M1,9 Q7.5,0 14,9" stroke="#f0d090" fill="none"/><path d="M2,11 L7,6 L13,12 L9,13 L7,9 L4,14Z" fill="#e02020"/><path d="M7,6 L13,12 L9,13Z" fill="#3050a0"/></svg>
<svg style="left:646.2px;top:72.8px" width="15" height="15"><rect width="15" height="15" fill="#dcdad4" stroke="#3060a8" stroke-width="1.5"/><rect x="3" y="3" width="3.5" height="3.5" fill="#f0b040"/><rect x="8.5" y="3" width="3.5" height="3.5" fill="#f0b040"/><rect x="3" y="8.5" width="3.5" height="3.5" fill="#f0b040"/><rect x="8.5" y="8.5" width="3.5" height="3.5" fill="#f0b040"/></svg>
<svg style="left:672.7px;top:72.8px" width="15" height="15"><rect width="15" height="15" fill="#dcdad4"/><rect x="2" y="1" width="11" height="13" fill="#f8f8f8" stroke="#3060a8" stroke-width="0.8"/><rect x="3.5" y="3" width="3" height="4" fill="#2a5ca8"/><rect x="9" y="3" width="3" height="4" fill="#20a040"/><rect x="9" y="9" width="3" height="3" fill="#f0a020"/><rect x="3.5" y="9" width="3" height="3" fill="#f0a020"/></svg>
<svg style="left:698.0px;top:72.8px" width="15" height="15"><rect width="15" height="15" fill="#dcdad4"/><path d="M13,3 Q8,-1 4,3 Q1,7.5 4,12 Q8,16 13,12" stroke="#f0a030" stroke-width="2.2" fill="none"/></svg>
<div style="left:208px;top:97px;width:160.6px;height:64.5px;border:1px solid #d0d0d0;box-shadow:inset 1px 1px 0 #fff, 1px 1px 0 #fff;"></div>
<div class="t" style="left:213px;top:91.5px;font-size:11px;line-height:12px;background:#f0f0f0;padding:0 2px;color:#1a1a1a;">单位</div>
<div style="left:208px;top:173.2px;width:160.6px;height:50px;border:1px solid #d0d0d0;box-shadow:inset 1px 1px 0 #fff, 1px 1px 0 #fff;"></div>
<div class="t" style="left:213px;top:167.5px;font-size:11px;line-height:12px;background:#f0f0f0;padding:0 2px;color:#1a1a1a;">显示几何体</div>
<svg style="left:217.5px;top:109.4px" width="10" height="10"><circle cx="5" cy="5" r="4.3" fill="#fff" stroke="#d4d4d4" stroke-width="0.9"/><path d="M2.2,8.2 A4.3,4.3 0 0 1 8,1.9" stroke="#444" stroke-width="1" fill="none"/></svg>
<div class="t" style="left:232.6px;top:109px;font-size:10.5px;color:#333;line-height:11px;">cd</div>
<svg style="left:217.5px;top:127.5px" width="10" height="10"><circle cx="5" cy="5" r="4.3" fill="#fff" stroke="#d4d4d4" stroke-width="0.9"/><path d="M2.2,8.2 A4.3,4.3 0 0 1 8,1.9" stroke="#444" stroke-width="1" fill="none"/><circle cx="5" cy="5" r="2.1" fill="#000"/></svg>
<div class="t" style="left:232.6px;top:127px;font-size:10.5px;color:#333;line-height:11px;">cd/klm</div>
<svg style="left:217.5px;top:144.7px" width="10" height="10"><circle cx="5" cy="5" r="4.3" fill="#fff" stroke="#d4d4d4" stroke-width="0.9"/><path d="M2.2,8.2 A4.3,4.3 0 0 1 8,1.9" stroke="#444" stroke-width="1" fill="none"/></svg>
<div class="t" style="left:232.6px;top:144.2px;font-size:10.5px;color:#333;line-height:11px;">W/sr</div>
<svg style="left:287.6px;top:110.6px" width="10" height="10"><circle cx="5" cy="5" r="4.3" fill="#fff" stroke="#d4d4d4" stroke-width="0.9"/><path d="M2.2,8.2 A4.3,4.3 0 0 1 8,1.9" stroke="#444" stroke-width="1" fill="none"/></svg>
<div class="t" style="left:302.5px;top:110px;font-size:10.5px;color:#333;line-height:11px;">mmol/(sr*s)</div>
<svg style="left:287.6px;top:129.4px" width="10" height="10"><circle cx="5" cy="5" r="4.3" fill="#fff" stroke="#d4d4d4" stroke-width="0.9"/><path d="M2.2,8.2 A4.3,4.3 0 0 1 8,1.9" stroke="#444" stroke-width="1" fill="none"/></svg>
<div class="t" style="left:302.5px;top:129px;font-size:10.5px;color:#333;line-height:11px;">mW/sr</div>
<svg style="left:217.5px;top:182.8px" width="10" height="10"><circle cx="5" cy="5" r="4.3" fill="#fff" stroke="#d4d4d4" stroke-width="0.9"/><path d="M2.2,8.2 A4.3,4.3 0 0 1 8,1.9" stroke="#444" stroke-width="1" fill="none"/></svg>
<div class="t" style="left:232.6px;top:182px;font-size:10.5px;color:#333;line-height:11px;">一边</div>
<svg style="left:217.5px;top:203.5px" width="10" height="10"><circle cx="5" cy="5" r="4.3" fill="#fff" stroke="#d4d4d4" stroke-width="0.9"/><path d="M2.2,8.2 A4.3,4.3 0 0 1 8,1.9" stroke="#444" stroke-width="1" fill="none"/></svg>
<div class="t" style="left:232.6px;top:203px;font-size:10.5px;color:#333;line-height:11px;">面向</div>
<svg style="left:287.6px;top:203.5px" width="10" height="10"><circle cx="5" cy="5" r="4.3" fill="#fff" stroke="#d4d4d4" stroke-width="0.9"/><path d="M2.2,8.2 A4.3,4.3 0 0 1 8,1.9" stroke="#444" stroke-width="1" fill="none"/><circle cx="5" cy="5" r="2.1" fill="#000"/></svg>
<div class="t" style="left:302.5px;top:203px;font-size:10.5px;color:#333;line-height:11px;">有两边</div>
<div class="t" style="left:242px;top:229.5px;font-size:10.5px;color:#222;">最大值</div>
<div class="t" style="left:282px;top:229.5px;font-size:10.5px;color:#222;">716.39</div>
<div class="t" style="left:316.9px;top:229.5px;font-size:10.5px;color:#222;">cd/klm</div>
<div class="t" style="left:267.5px;top:250px;font-size:10.5px;color:#222;">最大定位</div>
<div style="left:210.3px;top:267.2px;width:167.7px;height:86.8px;background:#fff;border-top:1.5px solid #8a8a8a;border-left:1.5px solid #8a8a8a;"></div>
<div style="left:211.8px;top:268.7px;width:166.2px;height:13.8px;background:#f0f0f0;border-bottom:1px solid #d8d8d8;"></div>
<div style="left:250.8px;top:268.7px;width:0.8px;height:13.8px;background:#c8c8c8;"></div>
<div style="left:292.2px;top:268.7px;width:0.8px;height:13.8px;background:#c8c8c8;"></div>
<div class="t" style="left:227px;top:270.5px;font-size:10.5px;color:#222;">C</div>
<div class="t" style="left:267.5px;top:270.5px;font-size:10.5px;color:#222;">G</div>
<div class="t" style="left:218.5px;top:284px;font-size:10.5px;color:#222;">0.00</div>
<div class="t" style="left:260.4px;top:284px;font-size:10.5px;color:#222;">0.00</div>
<svg style="left:214.2px;top:364.3px" width="10" height="10"><circle cx="5" cy="5" r="4.3" fill="#fff" stroke="#d4d4d4" stroke-width="0.9"/><path d="M2.2,8.2 A4.3,4.3 0 0 1 8,1.9" stroke="#444" stroke-width="1" fill="none"/><circle cx="5" cy="5" r="2.1" fill="#000"/></svg>
<div class="t" style="left:229.1px;top:364px;font-size:10.5px;color:#222;">浏览</div>
<svg style="left:299.0px;top:366.2px" width="10" height="10"><circle cx="5" cy="5" r="4.3" fill="#fff" stroke="#d4d4d4" stroke-width="0.9"/><path d="M2.2,8.2 A4.3,4.3 0 0 1 8,1.9" stroke="#444" stroke-width="1" fill="none"/></svg>
<div class="t" style="left:313.8px;top:366px;font-size:10.5px;color:#222;">编辑</div>
<div class="btn" style="left:209.6px;top:392.4px;width:77.6px;height:15px;">标准化</div>
<div class="btn" style="left:300.2px;top:392.4px;width:77.8px;height:15px;">100%</div>
<div class="btn" style="left:209.6px;top:415.4px;width:77.6px;height:15px;">= 恒量</div>
<div class="btn" style="left:300.2px;top:415.4px;width:77.8px;height:15px;">+ 恒量</div>
<div class="btn" style="left:209.6px;top:438.2px;width:77.6px;height:15px;">* 恒量</div>
<div class="btn" style="left:300.2px;top:438.2px;width:77.8px;height:15px;">/常数</div>
<div class="btn" style="left:209.6px;top:461.6px;width:77.6px;height:15px;">平均</div>
<div class="btn" style="left:300.2px;top:461.6px;width:77.8px;height:15px;">插入</div>
<div class="btn" style="left:209.6px;top:485.2px;width:77.6px;height:15px;">右=左</div>
<div class="btn" style="left:300.2px;top:485.2px;width:77.8px;height:15px;">左=右</div>
<div class="btn" style="left:209.6px;top:507.8px;width:77.6px;height:15px;">反转轴</div>
<div class="btn" style="left:300.2px;top:507.8px;width:77.8px;height:15px;">调整</div>
<div class="btn" style="left:209.6px;top:538.8px;width:77.6px;height:15px;">复制到</div>
<div class="btn" style="left:300.2px;top:538.8px;width:77.8px;height:15px;">粘贴</div>
<div class="btn" style="left:209.6px;top:569.4px;width:77.6px;height:15px;">Z旋转</div>
<div class="btn" style="left:300.2px;top:569.4px;width:77.8px;height:15px;">仰角 X Y</div>
<div class="btn" style="left:209.6px;top:600.7px;width:77.6px;height:15px;">使I  对称</div>
<div class="btn" style="left:300.2px;top:600.7px;width:77.8px;height:15px;">转换</div>
<div class="btn" style="left:209.6px;top:625px;width:166.6px;height:15.2px;font-size:10px;">将光谱转换为强度</div>
<div style="left:387.5px;top:96.4px;width:785.5px;height:609.30px;overflow:hidden;background:#fff;">
<div style="left:0px;top:0px;width:785.5px;height:23.2px;background:#f0f0f0;"></div>
<div style="left:0px;top:23.2px;width:50.9px;height:586.1px;background:#f0f0f0;"></div>
<div style="left:50.9px;top:23.2px;width:67.9px;height:586.1px;background:#ff5e3f;"></div>
<div style="left:118.8px;top:23.2px;width:666.7px;height:22.19px;background:#fdc563;"></div>
<div style="left:0px;top:44.89px;width:785.5px;height:1px;background:#d9d9d9;"></div>
<div style="left:0px;top:67.08px;width:785.5px;height:1px;background:#d9d9d9;"></div>
<div style="left:0px;top:89.27px;width:785.5px;height:1px;background:#d9d9d9;"></div>
<div style="left:0px;top:111.46px;width:785.5px;height:1px;background:#d9d9d9;"></div>
<div style="left:0px;top:133.65px;width:785.5px;height:1px;background:#d9d9d9;"></div>
<div style="left:0px;top:155.84px;width:785.5px;height:1px;background:#d9d9d9;"></div>
<div style="left:0px;top:178.03px;width:785.5px;height:1px;background:#d9d9d9;"></div>
<div style="left:0px;top:200.22px;width:785.5px;height:1px;background:#d9d9d9;"></div>
<div style="left:0px;top:222.41px;width:785.5px;height:1px;background:#d9d9d9;"></div>
<div style="left:0px;top:244.6px;width:785.5px;height:1px;background:#d9d9d9;"></div>
<div style="left:0px;top:266.79px;width:785.5px;height:1px;background:#d9d9d9;"></div>
<div style="left:0px;top:288.98px;width:785.5px;height:1px;background:#d9d9d9;"></div>
<div style="left:0px;top:311.17px;width:785.5px;height:1px;background:#d9d9d9;"></div>
<div style="left:0px;top:333.36px;width:785.5px;height:1px;background:#d9d9d9;"></div>
<div style="left:0px;top:355.55px;width:785.5px;height:1px;background:#d9d9d9;"></div>
<div style="left:0px;top:377.74px;width:785.5px;height:1px;background:#d9d9d9;"></div>
<div style="left:0px;top:399.93px;width:785.5px;height:1px;background:#d9d9d9;"></div>
<div style="left:0px;top:422.12px;width:785.5px;height:1px;background:#d9d9d9;"></div>
<div style="left:0px;top:444.31px;width:785.5px;height:1px;background:#d9d9d9;"></div>
<div style="left:0px;top:466.5px;width:785.5px;height:1px;background:#d9d9d9;"></div>
<div style="left:0px;top:488.69px;width:785.5px;height:1px;background:#d9d9d9;"></div>
<div style="left:0px;top:510.88px;width:785.5px;height:1px;background:#d9d9d9;"></div>
<div style="left:0px;top:533.07px;width:785.5px;height:1px;background:#d9d9d9;"></div>
<div style="left:0px;top:555.26px;width:785.5px;height:1px;background:#d9d9d9;"></div>
<div style="left:0px;top:577.45px;width:785.5px;height:1px;background:#d9d9d9;"></div>
<div style="left:0px;top:599.64px;width:785.5px;height:1px;background:#d9d9d9;"></div>
<div style="left:0px;top:621.83px;width:785.5px;height:1px;background:#d9d9d9;"></div>
<div style="left:0px;top:22.5px;width:785.5px;height:1.2px;background:#a8a8a8;"></div>
<div style="left:50.4px;top:0px;width:1px;height:23.2px;background:#a8a8a8;"></div>
<div style="left:50.4px;top:23.2px;width:1px;height:586.1px;background:#c0c0c0;"></div>
<div style="left:118.3px;top:0px;width:1px;height:23.2px;background:#a8a8a8;"></div>
<div style="left:118.3px;top:23.2px;width:1px;height:586.1px;background:#d6d6d6;"></div>
<div style="left:186.3px;top:0px;width:1px;height:23.2px;background:#a8a8a8;"></div>
<div style="left:186.3px;top:23.2px;width:1px;height:586.1px;background:#d6d6d6;"></div>
<div style="left:260.5px;top:0px;width:1px;height:23.2px;background:#a8a8a8;"></div>
<div style="left:260.5px;top:23.2px;width:1px;height:586.1px;background:#d6d6d6;"></div>
<div style="left:335.8px;top:0px;width:1px;height:23.2px;background:#a8a8a8;"></div>
<div style="left:335.8px;top:23.2px;width:1px;height:586.1px;background:#d6d6d6;"></div>
<div style="left:410px;top:0px;width:1px;height:23.2px;background:#a8a8a8;"></div>
<div style="left:410px;top:23.2px;width:1px;height:586.1px;background:#d6d6d6;"></div>
<div style="left:484.6px;top:0px;width:1px;height:23.2px;background:#a8a8a8;"></div>
<div style="left:484.6px;top:23.2px;width:1px;height:586.1px;background:#d6d6d6;"></div>
<div style="left:559.6px;top:0px;width:1px;height:23.2px;background:#a8a8a8;"></div>
<div style="left:559.6px;top:23.2px;width:1px;height:586.1px;background:#d6d6d6;"></div>
<div style="left:633.6px;top:0px;width:1px;height:23.2px;background:#a8a8a8;"></div>
<div style="left:633.6px;top:23.2px;width:1px;height:586.1px;background:#d6d6d6;"></div>
<div style="left:708.5px;top:0px;width:1px;height:23.2px;background:#a8a8a8;"></div>
<div style="left:708.5px;top:23.2px;width:1px;height:586.1px;background:#d6d6d6;"></div>
<div style="left:783px;top:0px;width:1px;height:23.2px;background:#a8a8a8;"></div>
<div style="left:783px;top:23.2px;width:1px;height:586.1px;background:#d6d6d6;"></div>
<div style="left:51.4px;top:44.89px;width:66.9px;height:1px;background:#f9a08e;"></div>
<div style="left:51.4px;top:67.08px;width:66.9px;height:1px;background:#f9a08e;"></div>
<div style="left:51.4px;top:89.27px;width:66.9px;height:1px;background:#f9a08e;"></div>
<div style="left:51.4px;top:111.46px;width:66.9px;height:1px;background:#f9a08e;"></div>
<div style="left:51.4px;top:133.65px;width:66.9px;height:1px;background:#f9a08e;"></div>
<div style="left:51.4px;top:155.84px;width:66.9px;height:1px;background:#f9a08e;"></div>
<div style="left:51.4px;top:178.03px;width:66.9px;height:1px;background:#f9a08e;"></div>
<div style="left:51.4px;top:200.22px;width:66.9px;height:1px;background:#f9a08e;"></div>
<div style="left:51.4px;top:222.41px;width:66.9px;height:1px;background:#f9a08e;"></div>
<div style="left:51.4px;top:244.6px;width:66.9px;height:1px;background:#f9a08e;"></div>
<div style="left:51.4px;top:266.79px;width:66.9px;height:1px;background:#f9a08e;"></div>
<div style="left:51.4px;top:288.98px;width:66.9px;height:1px;background:#f9a08e;"></div>
<div style="left:51.4px;top:311.17px;width:66.9px;height:1px;background:#f9a08e;"></div>
<div style="left:51.4px;top:333.36px;width:66.9px;height:1px;background:#f9a08e;"></div>
<div style="left:51.4px;top:355.55px;width:66.9px;height:1px;background:#f9a08e;"></div>
<div style="left:51.4px;top:377.74px;width:66.9px;height:1px;background:#f9a08e;"></div>
<div style="left:51.4px;top:399.93px;width:66.9px;height:1px;background:#f9a08e;"></div>
<div style="left:51.4px;top:422.12px;width:66.9px;height:1px;background:#f9a08e;"></div>
<div style="left:51.4px;top:444.31px;width:66.9px;height:1px;background:#f9a08e;"></div>
<div style="left:51.4px;top:466.5px;width:66.9px;height:1px;background:#f9a08e;"></div>
<div style="left:51.4px;top:488.69px;width:66.9px;height:1px;background:#f9a08e;"></div>
<div style="left:51.4px;top:510.88px;width:66.9px;height:1px;background:#f9a08e;"></div>
<div style="left:51.4px;top:533.07px;width:66.9px;height:1px;background:#f9a08e;"></div>
<div style="left:51.4px;top:555.26px;width:66.9px;height:1px;background:#f9a08e;"></div>
<div style="left:51.4px;top:577.45px;width:66.9px;height:1px;background:#f9a08e;"></div>
<div style="left:51.4px;top:599.64px;width:66.9px;height:1px;background:#f9a08e;"></div>
<div style="left:51.4px;top:621.83px;width:66.9px;height:1px;background:#f9a08e;"></div>
<div style="left:0px;top:0px;width:785.5px;height:1.4px;background:#8a8a8a;"></div>
<div style="left:0px;top:0px;width:1.4px;height:609.3px;background:#8a8a8a;"></div>
<div class="t" style="left:7.7px;top:6.8px;font-size:11.6px;color:#1a1a1a;">G&nbsp;&nbsp;/&nbsp;&nbsp;C</div>
<div class="t" style="left:50.9px;top:6.8px;width:58.4px;text-align:right;font-size:11.6px;color:#1a1a1a;">C0.00</div>
<div class="t" style="left:118.8px;top:6.8px;width:58.5px;text-align:right;font-size:11.6px;color:#1a1a1a;">C5.00</div>
<div class="t" style="left:186.8px;top:6.8px;width:64.7px;text-align:right;font-size:11.6px;color:#1a1a1a;">C10.00</div>
<div class="t" style="left:261px;top:6.8px;width:65.8px;text-align:right;font-size:11.6px;color:#1a1a1a;">C15.00</div>
<div class="t" style="left:336.3px;top:6.8px;width:64.7px;text-align:right;font-size:11.6px;color:#1a1a1a;">C20.00</div>
<div class="t" style="left:410.5px;top:6.8px;width:65.1px;text-align:right;font-size:11.6px;color:#1a1a1a;">C25.00</div>
<div class="t" style="left:485.1px;top:6.8px;width:65.5px;text-align:right;font-size:11.6px;color:#1a1a1a;">C30.00</div>
<div class="t" style="left:560.1px;top:6.8px;width:64.5px;text-align:right;font-size:11.6px;color:#1a1a1a;">C35.00</div>
<div class="t" style="left:634.1px;top:6.8px;width:65.4px;text-align:right;font-size:11.6px;color:#1a1a1a;">C40.00</div>
<div class="t" style="left:709px;top:6.8px;width:65px;text-align:right;font-size:11.6px;color:#1a1a1a;">C45.00</div>
<div class="t" style="left:5px;top:28.5px;font-size:11.6px;color:#1a1a1a;">G0.00</div>
<svg style="left:53.45px;top:26.1px" width="11" height="11"><path d="M1,1 L10,10 M10,1 L1,10" stroke="#ff3a20" stroke-width="1"/><circle cx="5.5" cy="5.5" r="4.4" fill="#ffff00" stroke="#5a5a20" stroke-width="0.9"/></svg>
<div class="t" style="left:68.3px;top:28.7px;font-size:11.6px;color:#fff;">716.39</div>
<svg style="left:121.35px;top:26.1px" width="11" height="11"><path d="M1,1 L10,10 M10,1 L1,10" stroke="#ff3a20" stroke-width="1"/><circle cx="5.5" cy="5.5" r="4.4" fill="#ffff00" stroke="#5a5a20" stroke-width="0.9"/></svg>
<div class="t" style="left:136.2px;top:28.7px;font-size:11.6px;color:#1a1a1a;">716.39</div>
<svg style="left:189.35px;top:26.1px" width="11" height="11"><path d="M1,1 L10,10 M10,1 L1,10" stroke="#ff3a20" stroke-width="1"/><circle cx="5.5" cy="5.5" r="4.4" fill="#ffff00" stroke="#5a5a20" stroke-width="0.9"/></svg>
<div class="t" style="left:204.2px;top:28.7px;font-size:11.6px;color:#1a1a1a;">716.39</div>
<svg style="left:263.55px;top:26.1px" width="11" height="11"><path d="M1,1 L10,10 M10,1 L1,10" stroke="#ff3a20" stroke-width="1"/><circle cx="5.5" cy="5.5" r="4.4" fill="#ffff00" stroke="#5a5a20" stroke-width="0.9"/></svg>
<div class="t" style="left:278.4px;top:28.7px;font-size:11.6px;color:#1a1a1a;">716.39</div>
<svg style="left:338.85px;top:26.1px" width="11" height="11"><path d="M1,1 L10,10 M10,1 L1,10" stroke="#ff3a20" stroke-width="1"/><circle cx="5.5" cy="5.5" r="4.4" fill="#ffff00" stroke="#5a5a20" stroke-width="0.9"/></svg>
<div class="t" style="left:353.7px;top:28.7px;font-size:11.6px;color:#1a1a1a;">716.39</div>
<svg style="left:413.05px;top:26.1px" width="11" height="11"><path d="M1,1 L10,10 M10,1 L1,10" stroke="#ff3a20" stroke-width="1"/><circle cx="5.5" cy="5.5" r="4.4" fill="#ffff00" stroke="#5a5a20" stroke-width="0.9"/></svg>
<div class="t" style="left:427.9px;top:28.7px;font-size:11.6px;color:#1a1a1a;">716.39</div>
<svg style="left:487.65px;top:26.1px" width="11" height="11"><path d="M1,1 L10,10 M10,1 L1,10" stroke="#ff3a20" stroke-width="1"/><circle cx="5.5" cy="5.5" r="4.4" fill="#ffff00" stroke="#5a5a20" stroke-width="0.9"/></svg>
<div class="t" style="left:502.5px;top:28.7px;font-size:11.6px;color:#1a1a1a;">716.39</div>
<svg style="left:562.65px;top:26.1px" width="11" height="11"><path d="M1,1 L10,10 M10,1 L1,10" stroke="#ff3a20" stroke-width="1"/><circle cx="5.5" cy="5.5" r="4.4" fill="#ffff00" stroke="#5a5a20" stroke-width="0.9"/></svg>
<div class="t" style="left:577.5px;top:28.7px;font-size:11.6px;color:#1a1a1a;">716.39</div>
<svg style="left:636.65px;top:26.1px" width="11" height="11"><path d="M1,1 L10,10 M10,1 L1,10" stroke="#ff3a20" stroke-width="1"/><circle cx="5.5" cy="5.5" r="4.4" fill="#ffff00" stroke="#5a5a20" stroke-width="0.9"/></svg>
<div class="t" style="left:651.5px;top:28.7px;font-size:11.6px;color:#1a1a1a;">716.39</div>
<svg style="left:711.55px;top:26.1px" width="11" height="11"><path d="M1,1 L10,10 M10,1 L1,10" stroke="#ff3a20" stroke-width="1"/><circle cx="5.5" cy="5.5" r="4.4" fill="#ffff00" stroke="#5a5a20" stroke-width="0.9"/></svg>
<div class="t" style="left:726.4px;top:28.7px;font-size:11.6px;color:#1a1a1a;">716.39</div>
<div class="t" style="left:5px;top:50.69px;font-size:11.6px;color:#1a1a1a;">G1.00</div>
<div class="t" style="left:55.1px;top:50.69px;font-size:11.6px;color:#fff;">716.16</div>
<div class="t" style="left:123px;top:50.69px;font-size:11.6px;color:#1a1a1a;">716.13</div>
<div class="t" style="left:191px;top:50.69px;font-size:11.6px;color:#1a1a1a;">716.11</div>
<div class="t" style="left:265.2px;top:50.69px;font-size:11.6px;color:#1a1a1a;">716.15</div>
<div class="t" style="left:340.5px;top:50.69px;font-size:11.6px;color:#1a1a1a;">716.15</div>
<div class="t" style="left:414.7px;top:50.69px;font-size:11.6px;color:#1a1a1a;">716.13</div>
<div class="t" style="left:489.3px;top:50.69px;font-size:11.6px;color:#1a1a1a;">716.10</div>
<div class="t" style="left:564.3px;top:50.69px;font-size:11.6px;color:#1a1a1a;">716.03</div>
<div class="t" style="left:638.3px;top:50.69px;font-size:11.6px;color:#1a1a1a;">716.09</div>
<div class="t" style="left:713.2px;top:50.69px;font-size:11.6px;color:#1a1a1a;">716.12</div>
<div class="t" style="left:5px;top:72.88px;font-size:11.6px;color:#1a1a1a;">G2.00</div>
<div class="t" style="left:55.1px;top:72.88px;font-size:11.6px;color:#fff;">715.29</div>
<div class="t" style="left:123px;top:72.88px;font-size:11.6px;color:#1a1a1a;">715.28</div>
<div class="t" style="left:191px;top:72.88px;font-size:11.6px;color:#1a1a1a;">715.26</div>
<div class="t" style="left:265.2px;top:72.88px;font-size:11.6px;color:#1a1a1a;">715.28</div>
<div class="t" style="left:340.5px;top:72.88px;font-size:11.6px;color:#1a1a1a;">715.30</div>
<div class="t" style="left:414.7px;top:72.88px;font-size:11.6px;color:#1a1a1a;">715.28</div>
<div class="t" style="left:489.3px;top:72.88px;font-size:11.6px;color:#1a1a1a;">715.26</div>
<div class="t" style="left:564.3px;top:72.88px;font-size:11.6px;color:#1a1a1a;">715.28</div>
<div class="t" style="left:638.3px;top:72.88px;font-size:11.6px;color:#1a1a1a;">715.26</div>
<div class="t" style="left:713.2px;top:72.88px;font-size:11.6px;color:#1a1a1a;">715.27</div>
<div class="t" style="left:5px;top:95.07px;font-size:11.6px;color:#1a1a1a;">G3.00</div>
<div class="t" style="left:55.1px;top:95.07px;font-size:11.6px;color:#fff;">713.92</div>
<div class="t" style="left:123px;top:95.07px;font-size:11.6px;color:#1a1a1a;">713.96</div>
<div class="t" style="left:191px;top:95.07px;font-size:11.6px;color:#1a1a1a;">713.88</div>
<div class="t" style="left:265.2px;top:95.07px;font-size:11.6px;color:#1a1a1a;">713.91</div>
<div class="t" style="left:340.5px;top:95.07px;font-size:11.6px;color:#1a1a1a;">714.01</div>
<div class="t" style="left:414.7px;top:95.07px;font-size:11.6px;color:#1a1a1a;">713.93</div>
<div class="t" style="left:489.3px;top:95.07px;font-size:11.6px;color:#1a1a1a;">713.97</div>
<div class="t" style="left:564.3px;top:95.07px;font-size:11.6px;color:#1a1a1a;">713.91</div>
<div class="t" style="left:638.3px;top:95.07px;font-size:11.6px;color:#1a1a1a;">713.91</div>
<div class="t" style="left:713.2px;top:95.07px;font-size:11.6px;color:#1a1a1a;">713.92</div>
<div class="t" style="left:5px;top:117.26px;font-size:11.6px;color:#1a1a1a;">G4.00</div>
<div class="t" style="left:55.1px;top:117.26px;font-size:11.6px;color:#fff;">712.15</div>
<div class="t" style="left:123px;top:117.26px;font-size:11.6px;color:#1a1a1a;">712.11</div>
<div class="t" style="left:191px;top:117.26px;font-size:11.6px;color:#1a1a1a;">712.11</div>
<div class="t" style="left:265.2px;top:117.26px;font-size:11.6px;color:#1a1a1a;">712.02</div>
<div class="t" style="left:340.5px;top:117.26px;font-size:11.6px;color:#1a1a1a;">712.11</div>
<div class="t" style="left:414.7px;top:117.26px;font-size:11.6px;color:#1a1a1a;">712.02</div>
<div class="t" style="left:489.3px;top:117.26px;font-size:11.6px;color:#1a1a1a;">712.08</div>
<div class="t" style="left:564.3px;top:117.26px;font-size:11.6px;color:#1a1a1a;">711.95</div>
<div class="t" style="left:638.3px;top:117.26px;font-size:11.6px;color:#1a1a1a;">712.05</div>
<div class="t" style="left:713.2px;top:117.26px;font-size:11.6px;color:#1a1a1a;">712.08</div>
<div class="t" style="left:5px;top:139.45px;font-size:11.6px;color:#1a1a1a;">G5.00</div>
<div class="t" style="left:55.1px;top:139.45px;font-size:11.6px;color:#fff;">709.66</div>
<div class="t" style="left:123px;top:139.45px;font-size:11.6px;color:#1a1a1a;">709.47</div>
<div class="t" style="left:191px;top:139.45px;font-size:11.6px;color:#1a1a1a;">709.65</div>
<div class="t" style="left:265.2px;top:139.45px;font-size:11.6px;color:#1a1a1a;">709.59</div>
<div class="t" style="left:340.5px;top:139.45px;font-size:11.6px;color:#1a1a1a;">709.64</div>
<div class="t" style="left:414.7px;top:139.45px;font-size:11.6px;color:#1a1a1a;">709.71</div>
<div class="t" style="left:489.3px;top:139.45px;font-size:11.6px;color:#1a1a1a;">709.69</div>
<div class="t" style="left:564.3px;top:139.45px;font-size:11.6px;color:#1a1a1a;">709.51</div>
<div class="t" style="left:638.3px;top:139.45px;font-size:11.6px;color:#1a1a1a;">709.64</div>
<div class="t" style="left:713.2px;top:139.45px;font-size:11.6px;color:#1a1a1a;">709.64</div>
<div class="t" style="left:5px;top:161.64px;font-size:11.6px;color:#1a1a1a;">G6.00</div>
<div class="t" style="left:55.1px;top:161.64px;font-size:11.6px;color:#fff;">706.69</div>
<div class="t" style="left:123px;top:161.64px;font-size:11.6px;color:#1a1a1a;">706.68</div>
<div class="t" style="left:191px;top:161.64px;font-size:11.6px;color:#1a1a1a;">706.63</div>
<div class="t" style="left:265.2px;top:161.64px;font-size:11.6px;color:#1a1a1a;">706.76</div>
<div class="t" style="left:340.5px;top:161.64px;font-size:11.6px;color:#1a1a1a;">706.76</div>
<div class="t" style="left:414.7px;top:161.64px;font-size:11.6px;color:#1a1a1a;">706.59</div>
<div class="t" style="left:489.3px;top:161.64px;font-size:11.6px;color:#1a1a1a;">706.62</div>
<div class="t" style="left:564.3px;top:161.64px;font-size:11.6px;color:#1a1a1a;">706.83</div>
<div class="t" style="left:638.3px;top:161.64px;font-size:11.6px;color:#1a1a1a;">706.53</div>
<div class="t" style="left:713.2px;top:161.64px;font-size:11.6px;color:#1a1a1a;">706.70</div>
<div class="t" style="left:5px;top:183.83px;font-size:11.6px;color:#1a1a1a;">G7.00</div>
<div class="t" style="left:55.1px;top:183.83px;font-size:11.6px;color:#fff;">703.32</div>
<div class="t" style="left:123px;top:183.83px;font-size:11.6px;color:#1a1a1a;">703.31</div>
<div class="t" style="left:191px;top:183.83px;font-size:11.6px;color:#1a1a1a;">703.07</div>
<div class="t" style="left:265.2px;top:183.83px;font-size:11.6px;color:#1a1a1a;">703.22</div>
<div class="t" style="left:340.5px;top:183.83px;font-size:11.6px;color:#1a1a1a;">703.25</div>
<div class="t" style="left:414.7px;top:183.83px;font-size:11.6px;color:#1a1a1a;">703.12</div>
<div class="t" style="left:489.3px;top:183.83px;font-size:11.6px;color:#1a1a1a;">703.20</div>
<div class="t" style="left:564.3px;top:183.83px;font-size:11.6px;color:#1a1a1a;">703.09</div>
<div class="t" style="left:638.3px;top:183.83px;font-size:11.6px;color:#1a1a1a;">703.08</div>
<div class="t" style="left:713.2px;top:183.83px;font-size:11.6px;color:#1a1a1a;">703.13</div>
<div class="t" style="left:5px;top:206.02px;font-size:11.6px;color:#1a1a1a;">G8.00</div>
<div class="t" style="left:55.1px;top:206.02px;font-size:11.6px;color:#fff;">699.23</div>
<div class="t" style="left:123px;top:206.02px;font-size:11.6px;color:#1a1a1a;">699.32</div>
<div class="t" style="left:191px;top:206.02px;font-size:11.6px;color:#1a1a1a;">699.13</div>
<div class="t" style="left:265.2px;top:206.02px;font-size:11.6px;color:#1a1a1a;">699.31</div>
<div class="t" style="left:340.5px;top:206.02px;font-size:11.6px;color:#1a1a1a;">699.09</div>
<div class="t" style="left:414.7px;top:206.02px;font-size:11.6px;color:#1a1a1a;">699.31</div>
<div class="t" style="left:489.3px;top:206.02px;font-size:11.6px;color:#1a1a1a;">699.05</div>
<div class="t" style="left:564.3px;top:206.02px;font-size:11.6px;color:#1a1a1a;">699.11</div>
<div class="t" style="left:638.3px;top:206.02px;font-size:11.6px;color:#1a1a1a;">699.19</div>
<div class="t" style="left:713.2px;top:206.02px;font-size:11.6px;color:#1a1a1a;">699.29</div>
<div class="t" style="left:5px;top:228.21px;font-size:11.6px;color:#1a1a1a;">G9.00</div>
<div class="t" style="left:55.1px;top:228.21px;font-size:11.6px;color:#fff;">694.42</div>
<div class="t" style="left:123px;top:228.21px;font-size:11.6px;color:#1a1a1a;">694.47</div>
<div class="t" style="left:191px;top:228.21px;font-size:11.6px;color:#1a1a1a;">694.47</div>
<div class="t" style="left:265.2px;top:228.21px;font-size:11.6px;color:#1a1a1a;">694.68</div>
<div class="t" style="left:340.5px;top:228.21px;font-size:11.6px;color:#1a1a1a;">694.66</div>
<div class="t" style="left:414.7px;top:228.21px;font-size:11.6px;color:#1a1a1a;">694.52</div>
<div class="t" style="left:489.3px;top:228.21px;font-size:11.6px;color:#1a1a1a;">694.65</div>
<div class="t" style="left:564.3px;top:228.21px;font-size:11.6px;color:#1a1a1a;">694.70</div>
<div class="t" style="left:638.3px;top:228.21px;font-size:11.6px;color:#1a1a1a;">694.55</div>
<div class="t" style="left:713.2px;top:228.21px;font-size:11.6px;color:#1a1a1a;">694.46</div>
<div class="t" style="left:5px;top:250.4px;font-size:11.6px;color:#1a1a1a;">G10.00</div>
<div class="t" style="left:55.1px;top:250.4px;font-size:11.6px;color:#fff;">689.64</div>
<div class="t" style="left:123px;top:250.4px;font-size:11.6px;color:#1a1a1a;">689.59</div>
<div class="t" style="left:191px;top:250.4px;font-size:11.6px;color:#1a1a1a;">689.57</div>
<div class="t" style="left:265.2px;top:250.4px;font-size:11.6px;color:#1a1a1a;">689.58</div>
<div class="t" style="left:340.5px;top:250.4px;font-size:11.6px;color:#1a1a1a;">689.62</div>
<div class="t" style="left:414.7px;top:250.4px;font-size:11.6px;color:#1a1a1a;">689.64</div>
<div class="t" style="left:489.3px;top:250.4px;font-size:11.6px;color:#1a1a1a;">689.64</div>
<div class="t" style="left:564.3px;top:250.4px;font-size:11.6px;color:#1a1a1a;">689.29</div>
<div class="t" style="left:638.3px;top:250.4px;font-size:11.6px;color:#1a1a1a;">689.62</div>
<div class="t" style="left:713.2px;top:250.4px;font-size:11.6px;color:#1a1a1a;">689.50</div>
<div class="t" style="left:5px;top:272.59px;font-size:11.6px;color:#1a1a1a;">G11.00</div>
<div class="t" style="left:55.1px;top:272.59px;font-size:11.6px;color:#fff;">683.43</div>
<div class="t" style="left:123px;top:272.59px;font-size:11.6px;color:#1a1a1a;">683.80</div>
<div class="t" style="left:191px;top:272.59px;font-size:11.6px;color:#1a1a1a;">683.87</div>
<div class="t" style="left:265.2px;top:272.59px;font-size:11.6px;color:#1a1a1a;">683.62</div>
<div class="t" style="left:340.5px;top:272.59px;font-size:11.6px;color:#1a1a1a;">683.61</div>
<div class="t" style="left:414.7px;top:272.59px;font-size:11.6px;color:#1a1a1a;">683.73</div>
<div class="t" style="left:489.3px;top:272.59px;font-size:11.6px;color:#1a1a1a;">683.70</div>
<div class="t" style="left:564.3px;top:272.59px;font-size:11.6px;color:#1a1a1a;">683.51</div>
<div class="t" style="left:638.3px;top:272.59px;font-size:11.6px;color:#1a1a1a;">683.99</div>
<div class="t" style="left:713.2px;top:272.59px;font-size:11.6px;color:#1a1a1a;">683.79</div>
<div class="t" style="left:5px;top:294.78px;font-size:11.6px;color:#1a1a1a;">G12.00</div>
<div class="t" style="left:55.1px;top:294.78px;font-size:11.6px;color:#fff;">677.55</div>
<div class="t" style="left:123px;top:294.78px;font-size:11.6px;color:#1a1a1a;">677.40</div>
<div class="t" style="left:191px;top:294.78px;font-size:11.6px;color:#1a1a1a;">677.20</div>
<div class="t" style="left:265.2px;top:294.78px;font-size:11.6px;color:#1a1a1a;">676.99</div>
<div class="t" style="left:340.5px;top:294.78px;font-size:11.6px;color:#1a1a1a;">676.88</div>
<div class="t" style="left:414.7px;top:294.78px;font-size:11.6px;color:#1a1a1a;">677.01</div>
<div class="t" style="left:489.3px;top:294.78px;font-size:11.6px;color:#1a1a1a;">677.23</div>
<div class="t" style="left:564.3px;top:294.78px;font-size:11.6px;color:#1a1a1a;">677.31</div>
<div class="t" style="left:638.3px;top:294.78px;font-size:11.6px;color:#1a1a1a;">676.90</div>
<div class="t" style="left:713.2px;top:294.78px;font-size:11.6px;color:#1a1a1a;">676.94</div>
<div class="t" style="left:5px;top:316.97px;font-size:11.6px;color:#1a1a1a;">G13.00</div>
<div class="t" style="left:55.1px;top:316.97px;font-size:11.6px;color:#fff;">670.21</div>
<div class="t" style="left:123px;top:316.97px;font-size:11.6px;color:#1a1a1a;">670.14</div>
<div class="t" style="left:191px;top:316.97px;font-size:11.6px;color:#1a1a1a;">670.07</div>
<div class="t" style="left:265.2px;top:316.97px;font-size:11.6px;color:#1a1a1a;">670.38</div>
<div class="t" style="left:340.5px;top:316.97px;font-size:11.6px;color:#1a1a1a;">670.45</div>
<div class="t" style="left:414.7px;top:316.97px;font-size:11.6px;color:#1a1a1a;">670.18</div>
<div class="t" style="left:489.3px;top:316.97px;font-size:11.6px;color:#1a1a1a;">669.85</div>
<div class="t" style="left:564.3px;top:316.97px;font-size:11.6px;color:#1a1a1a;">669.87</div>
<div class="t" style="left:638.3px;top:316.97px;font-size:11.6px;color:#1a1a1a;">670.01</div>
<div class="t" style="left:713.2px;top:316.97px;font-size:11.6px;color:#1a1a1a;">670.45</div>
<div class="t" style="left:5px;top:339.16px;font-size:11.6px;color:#1a1a1a;">G14.00</div>
<div class="t" style="left:55.1px;top:339.16px;font-size:11.6px;color:#fff;">663.04</div>
<div class="t" style="left:123px;top:339.16px;font-size:11.6px;color:#1a1a1a;">662.99</div>
<div class="t" style="left:191px;top:339.16px;font-size:11.6px;color:#1a1a1a;">663.21</div>
<div class="t" style="left:265.2px;top:339.16px;font-size:11.6px;color:#1a1a1a;">663.05</div>
<div class="t" style="left:340.5px;top:339.16px;font-size:11.6px;color:#1a1a1a;">663.15</div>
<div class="t" style="left:414.7px;top:339.16px;font-size:11.6px;color:#1a1a1a;">662.85</div>
<div class="t" style="left:489.3px;top:339.16px;font-size:11.6px;color:#1a1a1a;">663.20</div>
<div class="t" style="left:564.3px;top:339.16px;font-size:11.6px;color:#1a1a1a;">663.06</div>
<div class="t" style="left:638.3px;top:339.16px;font-size:11.6px;color:#1a1a1a;">662.95</div>
<div class="t" style="left:713.2px;top:339.16px;font-size:11.6px;color:#1a1a1a;">663.02</div>
<div class="t" style="left:5px;top:361.35px;font-size:11.6px;color:#1a1a1a;">G15.00</div>
<div class="t" style="left:55.1px;top:361.35px;font-size:11.6px;color:#fff;">656.00</div>
<div class="t" style="left:123px;top:361.35px;font-size:11.6px;color:#1a1a1a;">655.90</div>
<div class="t" style="left:191px;top:361.35px;font-size:11.6px;color:#1a1a1a;">656.19</div>
<div class="t" style="left:265.2px;top:361.35px;font-size:11.6px;color:#1a1a1a;">656.38</div>
<div class="t" style="left:340.5px;top:361.35px;font-size:11.6px;color:#1a1a1a;">656.27</div>
<div class="t" style="left:414.7px;top:361.35px;font-size:11.6px;color:#1a1a1a;">656.12</div>
<div class="t" style="left:489.3px;top:361.35px;font-size:11.6px;color:#1a1a1a;">656.02</div>
<div class="t" style="left:564.3px;top:361.35px;font-size:11.6px;color:#1a1a1a;">656.06</div>
<div class="t" style="left:638.3px;top:361.35px;font-size:11.6px;color:#1a1a1a;">655.94</div>
<div class="t" style="left:713.2px;top:361.35px;font-size:11.6px;color:#1a1a1a;">656.02</div>
<div class="t" style="left:5px;top:383.54px;font-size:11.6px;color:#1a1a1a;">G16.00</div>
<div class="t" style="left:55.1px;top:383.54px;font-size:11.6px;color:#fff;">648.61</div>
<div class="t" style="left:123px;top:383.54px;font-size:11.6px;color:#1a1a1a;">648.62</div>
<div class="t" style="left:191px;top:383.54px;font-size:11.6px;color:#1a1a1a;">648.80</div>
<div class="t" style="left:265.2px;top:383.54px;font-size:11.6px;color:#1a1a1a;">648.80</div>
<div class="t" style="left:340.5px;top:383.54px;font-size:11.6px;color:#1a1a1a;">648.98</div>
<div class="t" style="left:414.7px;top:383.54px;font-size:11.6px;color:#1a1a1a;">649.11</div>
<div class="t" style="left:489.3px;top:383.54px;font-size:11.6px;color:#1a1a1a;">649.07</div>
<div class="t" style="left:564.3px;top:383.54px;font-size:11.6px;color:#1a1a1a;">649.02</div>
<div class="t" style="left:638.3px;top:383.54px;font-size:11.6px;color:#1a1a1a;">649.02</div>
<div class="t" style="left:713.2px;top:383.54px;font-size:11.6px;color:#1a1a1a;">648.74</div>
<div class="t" style="left:5px;top:405.73px;font-size:11.6px;color:#1a1a1a;">G17.00</div>
<div class="t" style="left:55.1px;top:405.73px;font-size:11.6px;color:#fff;">640.32</div>
<div class="t" style="left:123px;top:405.73px;font-size:11.6px;color:#1a1a1a;">640.72</div>
<div class="t" style="left:191px;top:405.73px;font-size:11.6px;color:#1a1a1a;">640.43</div>
<div class="t" style="left:265.2px;top:405.73px;font-size:11.6px;color:#1a1a1a;">640.52</div>
<div class="t" style="left:340.5px;top:405.73px;font-size:11.6px;color:#1a1a1a;">640.29</div>
<div class="t" style="left:414.7px;top:405.73px;font-size:11.6px;color:#1a1a1a;">640.57</div>
<div class="t" style="left:489.3px;top:405.73px;font-size:11.6px;color:#1a1a1a;">640.21</div>
<div class="t" style="left:564.3px;top:405.73px;font-size:11.6px;color:#1a1a1a;">640.51</div>
<div class="t" style="left:638.3px;top:405.73px;font-size:11.6px;color:#1a1a1a;">640.32</div>
<div class="t" style="left:713.2px;top:405.73px;font-size:11.6px;color:#1a1a1a;">640.26</div>
<div class="t" style="left:5px;top:427.92px;font-size:11.6px;color:#1a1a1a;">G18.00</div>
<div class="t" style="left:55.1px;top:427.92px;font-size:11.6px;color:#fff;">630.70</div>
<div class="t" style="left:123px;top:427.92px;font-size:11.6px;color:#1a1a1a;">630.29</div>
<div class="t" style="left:191px;top:427.92px;font-size:11.6px;color:#1a1a1a;">630.33</div>
<div class="t" style="left:265.2px;top:427.92px;font-size:11.6px;color:#1a1a1a;">630.20</div>
<div class="t" style="left:340.5px;top:427.92px;font-size:11.6px;color:#1a1a1a;">630.20</div>
<div class="t" style="left:414.7px;top:427.92px;font-size:11.6px;color:#1a1a1a;">630.48</div>
<div class="t" style="left:489.3px;top:427.92px;font-size:11.6px;color:#1a1a1a;">630.41</div>
<div class="t" style="left:564.3px;top:427.92px;font-size:11.6px;color:#1a1a1a;">630.12</div>
<div class="t" style="left:638.3px;top:427.92px;font-size:11.6px;color:#1a1a1a;">630.49</div>
<div class="t" style="left:713.2px;top:427.92px;font-size:11.6px;color:#1a1a1a;">629.99</div>
<div class="t" style="left:5px;top:450.11px;font-size:11.6px;color:#1a1a1a;">G19.00</div>
<div class="t" style="left:55.1px;top:450.11px;font-size:11.6px;color:#fff;">618.66</div>
<div class="t" style="left:123px;top:450.11px;font-size:11.6px;color:#1a1a1a;">618.82</div>
<div class="t" style="left:191px;top:450.11px;font-size:11.6px;color:#1a1a1a;">618.48</div>
<div class="t" style="left:265.2px;top:450.11px;font-size:11.6px;color:#1a1a1a;">618.93</div>
<div class="t" style="left:340.5px;top:450.11px;font-size:11.6px;color:#1a1a1a;">618.63</div>
<div class="t" style="left:414.7px;top:450.11px;font-size:11.6px;color:#1a1a1a;">618.68</div>
<div class="t" style="left:489.3px;top:450.11px;font-size:11.6px;color:#1a1a1a;">618.71</div>
<div class="t" style="left:564.3px;top:450.11px;font-size:11.6px;color:#1a1a1a;">618.87</div>
<div class="t" style="left:638.3px;top:450.11px;font-size:11.6px;color:#1a1a1a;">618.16</div>
<div class="t" style="left:713.2px;top:450.11px;font-size:11.6px;color:#1a1a1a;">618.53</div>
<div class="t" style="left:5px;top:472.3px;font-size:11.6px;color:#1a1a1a;">G20.00</div>
<div class="t" style="left:55.1px;top:472.3px;font-size:11.6px;color:#fff;">607.12</div>
<div class="t" style="left:123px;top:472.3px;font-size:11.6px;color:#1a1a1a;">606.85</div>
<div class="t" style="left:191px;top:472.3px;font-size:11.6px;color:#1a1a1a;">606.17</div>
<div class="t" style="left:265.2px;top:472.3px;font-size:11.6px;color:#1a1a1a;">606.88</div>
<div class="t" style="left:340.5px;top:472.3px;font-size:11.6px;color:#1a1a1a;">606.27</div>
<div class="t" style="left:414.7px;top:472.3px;font-size:11.6px;color:#1a1a1a;">605.90</div>
<div class="t" style="left:489.3px;top:472.3px;font-size:11.6px;color:#1a1a1a;">606.10</div>
<div class="t" style="left:564.3px;top:472.3px;font-size:11.6px;color:#1a1a1a;">606.29</div>
<div class="t" style="left:638.3px;top:472.3px;font-size:11.6px;color:#1a1a1a;">606.50</div>
<div class="t" style="left:713.2px;top:472.3px;font-size:11.6px;color:#1a1a1a;">606.18</div>
<div class="t" style="left:5px;top:494.49px;font-size:11.6px;color:#1a1a1a;">G21.00</div>
<div class="t" style="left:55.1px;top:494.49px;font-size:11.6px;color:#fff;">594.07</div>
<div class="t" style="left:123px;top:494.49px;font-size:11.6px;color:#1a1a1a;">593.46</div>
<div class="t" style="left:191px;top:494.49px;font-size:11.6px;color:#1a1a1a;">593.23</div>
<div class="t" style="left:265.2px;top:494.49px;font-size:11.6px;color:#1a1a1a;">593.37</div>
<div class="t" style="left:340.5px;top:494.49px;font-size:11.6px;color:#1a1a1a;">594.06</div>
<div class="t" style="left:414.7px;top:494.49px;font-size:11.6px;color:#1a1a1a;">593.52</div>
<div class="t" style="left:489.3px;top:494.49px;font-size:11.6px;color:#1a1a1a;">592.75</div>
<div class="t" style="left:564.3px;top:494.49px;font-size:11.6px;color:#1a1a1a;">593.47</div>
<div class="t" style="left:638.3px;top:494.49px;font-size:11.6px;color:#1a1a1a;">593.07</div>
<div class="t" style="left:713.2px;top:494.49px;font-size:11.6px;color:#1a1a1a;">593.19</div>
<div class="t" style="left:5px;top:516.68px;font-size:11.6px;color:#1a1a1a;">G22.00</div>
<div class="t" style="left:55.1px;top:516.68px;font-size:11.6px;color:#fff;">579.33</div>
<div class="t" style="left:123px;top:516.68px;font-size:11.6px;color:#1a1a1a;">579.45</div>
<div class="t" style="left:191px;top:516.68px;font-size:11.6px;color:#1a1a1a;">580.08</div>
<div class="t" style="left:265.2px;top:516.68px;font-size:11.6px;color:#1a1a1a;">580.13</div>
<div class="t" style="left:340.5px;top:516.68px;font-size:11.6px;color:#1a1a1a;">579.54</div>
<div class="t" style="left:414.7px;top:516.68px;font-size:11.6px;color:#1a1a1a;">579.74</div>
<div class="t" style="left:489.3px;top:516.68px;font-size:11.6px;color:#1a1a1a;">580.03</div>
<div class="t" style="left:564.3px;top:516.68px;font-size:11.6px;color:#1a1a1a;">579.71</div>
<div class="t" style="left:638.3px;top:516.68px;font-size:11.6px;color:#1a1a1a;">579.15</div>
<div class="t" style="left:713.2px;top:516.68px;font-size:11.6px;color:#1a1a1a;">580.00</div>
<div class="t" style="left:5px;top:538.87px;font-size:11.6px;color:#1a1a1a;">G23.00</div>
<div class="t" style="left:55.1px;top:538.87px;font-size:11.6px;color:#fff;">565.85</div>
<div class="t" style="left:123px;top:538.87px;font-size:11.6px;color:#1a1a1a;">566.29</div>
<div class="t" style="left:191px;top:538.87px;font-size:11.6px;color:#1a1a1a;">565.92</div>
<div class="t" style="left:265.2px;top:538.87px;font-size:11.6px;color:#1a1a1a;">565.95</div>
<div class="t" style="left:340.5px;top:538.87px;font-size:11.6px;color:#1a1a1a;">566.45</div>
<div class="t" style="left:414.7px;top:538.87px;font-size:11.6px;color:#1a1a1a;">566.09</div>
<div class="t" style="left:489.3px;top:538.87px;font-size:11.6px;color:#1a1a1a;">565.88</div>
<div class="t" style="left:564.3px;top:538.87px;font-size:11.6px;color:#1a1a1a;">565.74</div>
<div class="t" style="left:638.3px;top:538.87px;font-size:11.6px;color:#1a1a1a;">565.99</div>
<div class="t" style="left:713.2px;top:538.87px;font-size:11.6px;color:#1a1a1a;">565.79</div>
<div class="t" style="left:5px;top:561.06px;font-size:11.6px;color:#1a1a1a;">G24.00</div>
<div class="t" style="left:55.1px;top:561.06px;font-size:11.6px;color:#fff;">550.79</div>
<div class="t" style="left:123px;top:561.06px;font-size:11.6px;color:#1a1a1a;">551.16</div>
<div class="t" style="left:191px;top:561.06px;font-size:11.6px;color:#1a1a1a;">551.76</div>
<div class="t" style="left:265.2px;top:561.06px;font-size:11.6px;color:#1a1a1a;">550.30</div>
<div class="t" style="left:340.5px;top:561.06px;font-size:11.6px;color:#1a1a1a;">550.61</div>
<div class="t" style="left:414.7px;top:561.06px;font-size:11.6px;color:#1a1a1a;">551.27</div>
<div class="t" style="left:489.3px;top:561.06px;font-size:11.6px;color:#1a1a1a;">550.72</div>
<div class="t" style="left:564.3px;top:561.06px;font-size:11.6px;color:#1a1a1a;">550.97</div>
<div class="t" style="left:638.3px;top:561.06px;font-size:11.6px;color:#1a1a1a;">550.44</div>
<div class="t" style="left:713.2px;top:561.06px;font-size:11.6px;color:#1a1a1a;">550.79</div>
<div class="t" style="left:5px;top:583.25px;font-size:11.6px;color:#1a1a1a;">G25.00</div>
<div class="t" style="left:55.1px;top:583.25px;font-size:11.6px;color:#fff;">535.54</div>
<div class="t" style="left:123px;top:583.25px;font-size:11.6px;color:#1a1a1a;">536.24</div>
<div class="t" style="left:191px;top:583.25px;font-size:11.6px;color:#1a1a1a;">535.08</div>
<div class="t" style="left:265.2px;top:583.25px;font-size:11.6px;color:#1a1a1a;">535.91</div>
<div class="t" style="left:340.5px;top:583.25px;font-size:11.6px;color:#1a1a1a;">535.62</div>
<div class="t" style="left:414.7px;top:583.25px;font-size:11.6px;color:#1a1a1a;">536.01</div>
<div class="t" style="left:489.3px;top:583.25px;font-size:11.6px;color:#1a1a1a;">535.15</div>
<div class="t" style="left:564.3px;top:583.25px;font-size:11.6px;color:#1a1a1a;">535.96</div>
<div class="t" style="left:638.3px;top:583.25px;font-size:11.6px;color:#1a1a1a;">536.19</div>
<div class="t" style="left:713.2px;top:583.25px;font-size:11.6px;color:#1a1a1a;">535.30</div>
<div class="t" style="left:5px;top:605.44px;font-size:11.6px;color:#1a1a1a;">G26.00</div>
<div class="t" style="left:55.1px;top:605.44px;font-size:11.6px;color:#fff;">520.35</div>
<div class="t" style="left:123px;top:605.44px;font-size:11.6px;color:#1a1a1a;">519.88</div>
<div class="t" style="left:191px;top:605.44px;font-size:11.6px;color:#1a1a1a;">520.07</div>
<div class="t" style="left:265.2px;top:605.44px;font-size:11.6px;color:#1a1a1a;">521.00</div>
<div class="t" style="left:340.5px;top:605.44px;font-size:11.6px;color:#1a1a1a;">520.56</div>
<div class="t" style="left:414.7px;top:605.44px;font-size:11.6px;color:#1a1a1a;">520.13</div>
<div class="t" style="left:489.3px;top:605.44px;font-size:11.6px;color:#1a1a1a;">519.84</div>
<div class="t" style="left:564.3px;top:605.44px;font-size:11.6px;color:#1a1a1a;">520.59</div>
<div class="t" style="left:638.3px;top:605.44px;font-size:11.6px;color:#1a1a1a;">520.35</div>
<div class="t" style="left:713.2px;top:605.44px;font-size:11.6px;color:#1a1a1a;">520.35</div>
</div>
<div style="left:388.9px;top:705.7px;width:784.1px;height:16px;background:#f0f0f0;"></div>
<div style="left:404.6px;top:710.5px;width:768.4px;height:6.4px;background:#858585;"></div>
<div style="left:388.9px;top:721.6px;width:784.1px;height:1px;background:#e6e6e6;"></div>
<div style="left:387.5px;top:705.7px;width:1.4px;height:15.9px;background:#8a8a8a;"></div>
<div style="left:10px;top:729.5px;width:1163px;height:1px;background:#e2e2e2;"></div>
<div style="left:21px;top:737.4px;width:410.5px;height:99.6px;border:1px solid #cfcfcf;box-shadow:inset 1px 1px 0 #fbfbfb;"></div>
<div class="t" style="left:25px;top:732px;font-size:10.5px;line-height:11px;background:#f0f0f0;padding:0 2px;color:#1a1a1a;">灯具</div>
<div style="left:442.7px;top:737.4px;width:454.8px;height:99.6px;border:1px solid #cfcfcf;box-shadow:inset 1px 1px 0 #fbfbfb;"></div>
<div class="t" style="left:447px;top:732px;font-size:10.5px;line-height:11px;background:#f0f0f0;padding:0 2px;color:#1a1a1a;">测量</div>
<div class="t" style="left:-10.5px;top:750.7px;width:150px;text-align:right;font-size:10.3px;line-height:10px;color:#141414;letter-spacing:-0.25px;">Source Flux</div>
<div class="t" style="left:147.9px;top:750.7px;font-size:10.3px;line-height:10px;color:#141414;letter-spacing:-0.25px;">1000.00 lm</div>
<div class="t" style="left:-10.5px;top:767.1px;width:150px;text-align:right;font-size:10.3px;line-height:10px;color:#141414;letter-spacing:-0.25px;">Luminaire Flux</div>
<div class="t" style="left:147.9px;top:767.1px;font-size:10.3px;line-height:10px;color:#141414;letter-spacing:-0.25px;">1000.00 lm</div>
<div class="t" style="left:-10.5px;top:785.4px;width:150px;text-align:right;font-size:10.3px;line-height:10px;color:#141414;letter-spacing:-0.25px;">灯具功率</div>
<div class="t" style="left:147.9px;top:785.4px;font-size:10.3px;line-height:10px;color:#141414;letter-spacing:-0.25px;">10.00 W</div>
<div class="t" style="left:193px;top:785.4px;width:150px;text-align:right;font-size:10.3px;line-height:10px;color:#141414;letter-spacing:-0.25px;">光效</div>
<div class="t" style="left:348.7px;top:785.4px;font-size:10.3px;line-height:10px;color:#141414;letter-spacing:-0.25px;">100.000 lm/W</div>
<div class="t" style="left:78.1px;top:802.6px;font-size:10.3px;line-height:10px;color:#141414;letter-spacing:-0.25px;">编码 40300</div>
<div class="t" style="left:301px;top:802.6px;font-size:10.3px;line-height:10px;color:#141414;letter-spacing:-0.25px;">调整电流 0.00 A</div>
<div class="t" style="left:78.1px;top:819.7px;font-size:10.3px;line-height:10px;color:#141414;letter-spacing:-0.25px;">名称&nbsp;&nbsp; DWL IP54 10W 75?C90 SAT ED 3K</div>
<div class="t" style="left:381px;top:750.7px;width:150px;text-align:right;font-size:10.3px;line-height:10px;color:#141414;letter-spacing:-0.25px;">效率</div>
<div class="t" style="left:535.6px;top:750.7px;font-size:10.3px;line-height:10px;color:#141414;letter-spacing:-0.25px;">100.00 %</div>
<div class="t" style="left:381px;top:767.1px;width:150px;text-align:right;font-size:10.3px;line-height:10px;color:#141414;letter-spacing:-0.25px;">对称:</div>
<div class="t" style="left:535.6px;top:767.1px;font-size:10.3px;line-height:10px;color:#141414;letter-spacing:-0.25px;">Double Symmetrical</div>
<div class="t" style="left:451.7px;top:783.5px;font-size:10.3px;line-height:10px;color:#141414;letter-spacing:-0.25px;">Maximum Gamma</div>
<div class="t" style="left:540.5px;top:783.5px;font-size:10.3px;line-height:10px;color:#141414;letter-spacing:-0.25px;">90</div>
<div class="t" style="left:381px;top:802.6px;width:150px;text-align:right;font-size:10.3px;line-height:10px;color:#141414;letter-spacing:-0.25px;">编码</div>
<div class="t" style="left:535.6px;top:802.6px;font-size:10.3px;line-height:10px;color:#141414;letter-spacing:-0.25px;">40300o</div>
<div class="t" style="left:381px;top:819.7px;width:150px;text-align:right;font-size:10.3px;line-height:10px;color:#141414;letter-spacing:-0.25px;">名称</div>
<div class="t" style="left:535.6px;top:819.7px;font-size:10.3px;line-height:10px;color:#141414;letter-spacing:-0.25px;">DWL IP54 10W 75?C90 SAT</div>
<div class="t" style="left:625px;top:750.7px;width:150px;text-align:right;font-size:10.3px;line-height:10px;color:#141414;letter-spacing:-0.25px;">最大 光强</div>
<div class="t" style="left:785.2px;top:750.7px;font-size:10.3px;line-height:10px;color:#141414;letter-spacing:-0.25px;">716.39&nbsp; cd/klm</div>
<div class="t" style="left:625px;top:767.1px;width:150px;text-align:right;font-size:10.3px;line-height:10px;color:#141414;letter-spacing:-0.25px;">最大定位</div>
<div class="t" style="left:785.2px;top:767.1px;font-size:10.3px;line-height:10px;color:#141414;letter-spacing:-0.25px;">C=0.00 G=0.00</div>
<div class="t" style="left:625px;top:784.7px;width:150px;text-align:right;font-size:10.3px;line-height:10px;color:#141414;letter-spacing:-0.25px;">测量光通量</div>
<div class="t" style="left:785.2px;top:784.7px;font-size:10.3px;line-height:10px;color:#141414;letter-spacing:-0.25px;">1000.000 lm</div>
<div class="t" style="left:625px;top:801.7px;width:150px;text-align:right;font-size:10.3px;line-height:10px;color:#141414;letter-spacing:-0.25px;">前方区域</div>
<div class="t" style="left:787px;top:801.7px;font-size:10.3px;line-height:10px;color:#141414;letter-spacing:-0.25px;">0.005281 m2</div>
<div class="t" style="left:625px;top:819.7px;width:150px;text-align:right;font-size:10.3px;line-height:10px;color:#141414;letter-spacing:-0.25px;">边缘区域</div>
<div class="t" style="left:787px;top:819.7px;font-size:10.3px;line-height:10px;color:#141414;letter-spacing:-0.25px;">0.000000 m2</div>
<div style="left:907.6px;top:737.7px;width:67.4px;height:64.3px;border:1px solid #8a8a8a;background:#f0f0f0;"></div>
<svg style="left:900px;top:735px" width="80" height="70"><ellipse cx="41.5" cy="34.9" rx="20.4" ry="18.8" fill="#fff" stroke="#333" stroke-width="0.9"/><line x1="13.8" y1="34.7" x2="68.7" y2="34.7" stroke="#f08070" stroke-width="1.2"/><line x1="41.5" y1="10" x2="41.5" y2="60.3" stroke="#4060a0" stroke-width="0.9"/></svg>
<div class="t" style="left:911.6px;top:808.9px;font-size:10.3px;line-height:10px;color:#141414;letter-spacing:-0.25px;letter-spacing:0px;">Lum. Dim. Diam.:82 mm</div>
<div class="t" style="left:911.6px;top:825.7px;font-size:10.3px;line-height:10px;color:#141414;letter-spacing:-0.25px;letter-spacing:0px;">Height:1 mm</div>
</body></html>
